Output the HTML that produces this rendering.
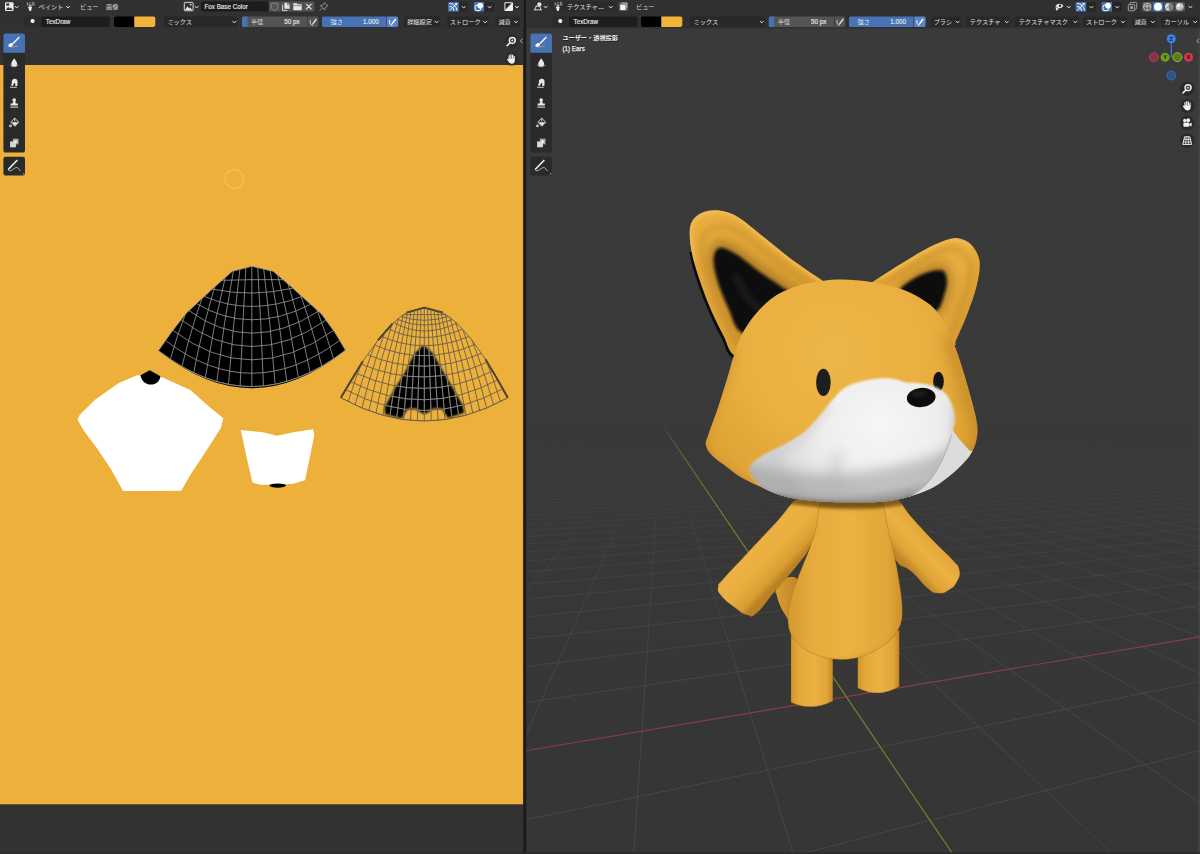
<!DOCTYPE html>
<html><head><meta charset="utf-8"><title>Blender</title>
<style>
html,body{margin:0;padding:0;background:#303030;overflow:hidden}
svg{display:block}
text{font-family:"Liberation Sans","Noto Sans CJK JP",sans-serif}
</style></head><body>
<svg width="1200" height="854" viewBox="0 0 1200 854">
<defs>
<clipPath id="c1"><path d="M251.8 266.3L273.2 271.3L291 286.5L307.5 301.5L321.5 314L335 332.6L345.5 350.3Q251.7 422.7 158.4 350.7L171.2 332.4L186 313.4L199.5 300.8L214 287.5L232.3 271.3Z"/></clipPath>
<filter id="b1" x="-10%" y="-10%" width="120%" height="120%"><feGaussianBlur stdDeviation="1.3"/></filter>
<clipPath id="c2"><path d="M424.3 307.7L442.8 312.7L449 316.8L458.2 324.4L472 340.1L485.4 359.2L496.9 378.4L507.8 397.8Q424.3 444.4 340.8 397.8L351.3 380.3L362.8 361.2L378.1 340.1L392.5 323.6L400.5 316.8L406.5 312.7Z"/></clipPath>
<clipPath id="cA"><path d="M423.7 345L433.2 353.7L443.8 372.7L454.3 390.6L462.7 405.3L464.2 412.7L448 418L441.7 408.5L433.2 408.5L429 411.7L424.3 414L419.5 411.7L416.4 408.5L407.9 408.5L401.6 418.5L385 414L384.6 407.4L394.2 389.5L404.8 372.7L414.3 353.7Z"/></clipPath>
<clipPath id="c2b"><path d="M424.3 307.7L442.8 312.7L449 316.8L458.2 324.4L472 340.1L485.4 359.2L496.9 378.4L507.8 397.8Q424.3 444.4 340.8 397.8L351.3 380.3L362.8 361.2L378.1 340.1L392.5 323.6L400.5 316.8L406.5 312.7Z"/></clipPath>
<filter id="b05" x="-5%" y="-5%" width="110%" height="110%"><feGaussianBlur stdDeviation="0.6"/></filter>
<linearGradient id="bgR" x1="0" y1="0" x2="0" y2="1"><stop offset="0" stop-color="#3a3a3a"/><stop offset="0.5" stop-color="#393939"/><stop offset="1" stop-color="#353535"/></linearGradient>
<clipPath id="vp"><rect x="526" y="0" width="674" height="854"/></clipPath>
<linearGradient id="gfade" x1="0" y1="425" x2="0" y2="854" gradientUnits="userSpaceOnUse"><stop offset="0" stop-color="#fff" stop-opacity="0"/><stop offset="0.05" stop-color="#fff" stop-opacity="0.03"/><stop offset="0.105" stop-color="#fff" stop-opacity="0.13"/><stop offset="0.22" stop-color="#fff" stop-opacity="0.38"/><stop offset="0.36" stop-color="#fff" stop-opacity="0.68"/><stop offset="0.6" stop-color="#fff" stop-opacity="1"/></linearGradient>
<mask id="gm" maskUnits="userSpaceOnUse" x="526" y="0" width="674" height="854"><rect x="526" y="425" width="674" height="429" fill="url(#gfade)"/></mask>
<linearGradient id="afade" x1="0" y1="425" x2="0" y2="854" gradientUnits="userSpaceOnUse"><stop offset="0" stop-color="#fff" stop-opacity="0"/><stop offset="0.02" stop-color="#fff" stop-opacity="0.25"/><stop offset="0.07" stop-color="#fff" stop-opacity="0.6"/><stop offset="0.2" stop-color="#fff" stop-opacity="0.9"/><stop offset="0.4" stop-color="#fff" stop-opacity="1"/></linearGradient>
<mask id="am" maskUnits="userSpaceOnUse" x="526" y="0" width="674" height="854"><rect x="526" y="425" width="674" height="429" fill="url(#afade)"/></mask>
<filter id="fb1" filterUnits="userSpaceOnUse" x="520" y="150" width="680" height="600"><feGaussianBlur stdDeviation="1.6"/></filter>
<filter id="fb2" filterUnits="userSpaceOnUse" x="520" y="150" width="680" height="600"><feGaussianBlur stdDeviation="3"/></filter>
<filter id="fb3" filterUnits="userSpaceOnUse" x="520" y="150" width="680" height="600"><feGaussianBlur stdDeviation="6"/></filter>
<filter id="fb07" filterUnits="userSpaceOnUse" x="520" y="150" width="680" height="600"><feGaussianBlur stdDeviation="0.9"/></filter>
<filter id="fb0" filterUnits="userSpaceOnUse" x="520" y="150" width="680" height="600"><feGaussianBlur stdDeviation="0.5"/></filter>
<clipPath id="headc"><path d="M734.3 354.6C737 346.9 739.6 338.5 743.7 331.1C747.8 323.8 753.1 316.6 758.7 310.5C764.3 304.4 770.5 298.8 777.4 294.6C784.3 290.4 792.4 287.5 799.9 285.2C807.4 282.9 815.7 281.8 822.4 280.9C829.1 280 834.4 279.7 840 279.6C845.6 279.5 850.5 279.9 856 280.3C861.5 280.7 866.1 281 872.8 282.2C879.5 283.4 889.2 285.3 896.2 287.4C903.2 289.5 908.6 291.6 914.9 295C921.1 298.4 928.7 303 933.7 308C938.7 313 941.5 318.9 944.9 324.9C948.3 330.8 951.2 337.1 953.9 343.7C956.6 350.3 958.3 355.6 961.1 364.4C963.9 373.1 967.8 386.2 970.5 396.2C973.2 406.2 976.2 416.8 977.1 424.3C978 431.8 977.2 436.2 976.1 441.2C975 446.2 973 450.2 970.5 454.3C968 458.4 965.1 461.4 961.1 465.5C957.1 469.6 951 474.9 946.2 478.6C941.4 482.3 937.8 485 932.5 487.7C927.2 490.4 920 493 914.2 495C908.4 497 903.8 498.4 897.7 499.6C891.6 500.8 885.5 501.6 877.5 502C869.5 502.4 859.2 502.4 850 502.3C840.8 502.2 831.7 502 822.5 501.4C813.3 500.8 802.6 499.9 795 498.7C787.4 497.5 782.8 496.2 776.7 494.1C770.6 492 764.4 488.7 758.3 485.8C752.2 482.9 745.1 479.8 740 476.7C734.9 473.6 732.1 470.9 727.5 467.4C722.9 463.9 716.1 459.6 712.5 455.8C708.9 452.1 706.5 448.6 705.9 444.9C705.3 441.2 706.7 439.9 708.7 433.7C710.7 427.4 715 416.8 718.1 407.4C721.2 398 724.8 386.3 727.5 377.5C730.2 368.7 731.6 362.3 734.3 354.6Z"/></clipPath>
<radialGradient id="gHead" gradientUnits="userSpaceOnUse" cx="835" cy="350" r="190"><stop offset="0" stop-color="#eeb548"/><stop offset="0.45" stop-color="#eab041"/><stop offset="0.8" stop-color="#e0a336"/><stop offset="1" stop-color="#d3962d"/></radialGradient>
<linearGradient id="gBody" gradientUnits="userSpaceOnUse" x1="790" y1="0" x2="905" y2="0"><stop offset="0" stop-color="#d59a30"/><stop offset="0.18" stop-color="#e6aa3c"/><stop offset="0.5" stop-color="#ecb243"/><stop offset="0.85" stop-color="#e3a638"/><stop offset="1" stop-color="#c98c28"/></linearGradient>
<linearGradient id="gTail" gradientUnits="userSpaceOnUse" x1="772" y1="0" x2="796" y2="0"><stop offset="0" stop-color="#dda135"/><stop offset="1" stop-color="#c48827"/></linearGradient>
<linearGradient id="gL1" gradientUnits="userSpaceOnUse" x1="791" y1="0" x2="832.8" y2="0"><stop offset="0" stop-color="#d1952c"/><stop offset="0.2" stop-color="#e5a93b"/><stop offset="0.55" stop-color="#ebb142"/><stop offset="0.85" stop-color="#e2a537"/><stop offset="1" stop-color="#c58926"/></linearGradient>
<linearGradient id="gL2" gradientUnits="userSpaceOnUse" x1="857.8" y1="0" x2="899.2" y2="0"><stop offset="0" stop-color="#d1952c"/><stop offset="0.2" stop-color="#e5a93b"/><stop offset="0.55" stop-color="#ebb142"/><stop offset="0.85" stop-color="#e2a537"/><stop offset="1" stop-color="#c58926"/></linearGradient>
<linearGradient id="gA1" gradientUnits="userSpaceOnUse" x1="742" y1="548" x2="778" y2="582"><stop offset="0" stop-color="#dfa437"/><stop offset="0.2" stop-color="#ebb142"/><stop offset="0.55" stop-color="#e9ae3f"/><stop offset="0.85" stop-color="#d99d32"/><stop offset="1" stop-color="#b98024"/></linearGradient>
<linearGradient id="gA2" gradientUnits="userSpaceOnUse" x1="912" y1="572" x2="940" y2="546"><stop offset="0" stop-color="#c08626"/><stop offset="0.25" stop-color="#e0a437"/><stop offset="0.6" stop-color="#ebb142"/><stop offset="1" stop-color="#e2a639"/></linearGradient>
<clipPath id="bodyc"><path d="M821.5 486C811.2 488 820.8 491.1 819.9 498C819 504.9 817.8 519.5 816.2 527.5C814.6 535.5 813.3 538.4 810.5 546.2C807.7 554 802.4 566.2 799.3 574.3C796.2 582.4 793.7 588.3 791.8 594.9C789.9 601.5 788.5 607.7 788.1 613.7C787.8 619.7 788 625.9 789.7 630.9C791.4 635.9 794.4 639.8 798.1 643.5C801.8 647.2 806.2 650.8 812.1 653.4C818 656 826.2 658.2 833.2 659C840.2 659.8 847.3 659.7 854.3 658.3C861.3 656.9 869.1 654 875.4 650.6C881.7 647.2 888 642.4 892.2 637.9C896.4 633.4 898.9 629 900.6 623.9C902.3 618.8 902.4 613.9 902.2 607.4C902.1 600.9 900.9 593 899.7 584.9C898.5 576.8 897 568.4 895 558.7C893 549 889.5 536.9 887.5 526.8C885.5 516.7 883.8 504.8 882.8 498C881.8 491.2 891.7 488 881.5 486C871.3 484 831.8 484 821.5 486Z"/></clipPath>
<clipPath id="torsoc"><path d="M821.5 486C811.2 488 820.8 491.1 819.9 498C819 504.9 817.8 519.5 816.2 527.5C814.6 535.5 813.3 538.4 810.5 546.2C807.7 554 802.4 566.2 799.3 574.3C796.2 582.4 793.7 588.3 791.8 594.9C789.9 601.5 788.5 607.7 788.1 613.7C787.8 619.7 788 625.9 789.7 630.9C791.4 635.9 794.4 639.8 798.1 643.5C801.8 647.2 806.2 650.8 812.1 653.4C818 656 826.2 658.2 833.2 659C840.2 659.8 847.3 659.7 854.3 658.3C861.3 656.9 869.1 654 875.4 650.6C881.7 647.2 888 642.4 892.2 637.9C896.4 633.4 898.9 629 900.6 623.9C902.3 618.8 902.4 613.9 902.2 607.4C902.1 600.9 900.9 593 899.7 584.9C898.5 576.8 897 568.4 895 558.7C893 549 889.5 536.9 887.5 526.8C885.5 516.7 883.8 504.8 882.8 498C881.8 491.2 891.7 488 881.5 486C871.3 484 831.8 484 821.5 486Z"/><path d="M800 497C788.5 504.1 789.1 508.6 774.9 523.7C760.7 538.8 760.5 539 746.8 553.7C733.1 568.4 731.1 570 723.5 578.8C715.9 587.6 718.7 582.2 718.2 586.8C717.7 591.4 717 590.3 721.6 596C726.2 601.7 728.6 602.9 735.5 608C742.4 613.1 741.9 613.8 747.6 615C753.3 616.2 749.7 618.9 757 612.6C764.3 606.3 764.1 603.9 774.9 591.2C785.7 578.5 787.9 576.9 797.4 564.9C806.9 552.9 803.9 558.2 810.5 546.2C817.1 534.2 820 533.1 822 520C824 506.9 823.9 503.1 818 497C812.1 490.9 811.5 489.9 800 497Z"/><path d="M884 497C887.3 489.1 890.1 494.7 897.5 500.2C904.9 505.7 902 506.4 911.8 517.5C921.6 528.6 923.4 530.5 934.3 541.8C945.2 553.1 945.9 552.6 952.5 560C959.1 567.4 958 563.8 959.2 569.5C960.4 575.2 960 575.8 957 581.4C954 587 953.2 587.3 948 590.4C942.8 593.5 943 593.6 937.6 593C932.2 592.4 934.5 593.9 927.6 588.2C920.7 582.5 920.5 579.7 911.8 571.8C903.1 563.9 902.1 569.8 895 558.7C887.9 547.6 887.9 546.5 885 530C882.1 513.5 880.7 504.9 884 497Z"/></clipPath>
<clipPath id="earLc"><path d="M736 356C728.2 353.1 727.8 343.7 723.1 334.9C718.5 326.1 713 315.2 708.1 303C703.2 290.8 697.1 273.7 694 261.8C690.9 250 689.4 239.5 689.7 231.9C690 224.3 692 220.1 696 216.5C700 212.9 707 210.4 713.7 210.3C720.4 210.2 727.8 211.4 736.2 215.9C744.6 220.4 754.9 230.2 764.3 237.5C773.7 244.8 782.7 252.8 792.4 260C802.1 267.2 813.5 274.3 822.4 280.6C831.3 286.9 846.4 289.8 846 298C845.6 306.2 832.7 321 820 330C807.3 339 784 347.7 770 352C756 356.3 743.8 358.9 736 356Z"/></clipPath>
<clipPath id="slc"><rect x="680" y="252" width="80" height="120"/></clipPath>
<linearGradient id="gEarL" gradientUnits="userSpaceOnUse" x1="700" y1="215" x2="790" y2="330"><stop offset="0" stop-color="#e9ae40"/><stop offset="1" stop-color="#d99d32"/></linearGradient>
<clipPath id="earRc"><path d="M872.8 281.8C880.5 276.9 887.6 272.1 896.2 266.8C904.8 261.5 916.2 254.4 924.3 250C932.4 245.6 939.3 242.6 944.9 240.6C950.5 238.6 953.6 237.6 958 238.2C962.4 238.8 967.5 240.6 971.1 244.4C974.7 248.2 978.7 254.3 979.6 261.2C980.5 268.1 978.8 276.9 976.8 285.6C974.8 294.4 970.8 304.6 967.4 313.7C964 322.8 958.5 334.7 956.2 339.9C954 345.1 957.4 345 953.9 345C950.4 345 944 345.8 935 340C926 334.2 914.2 317.3 900 310C885.8 302.7 854.5 300.7 850 296C845.5 291.3 865.1 286.7 872.8 281.8Z"/></clipPath>
<linearGradient id="gEarR" gradientUnits="userSpaceOnUse" x1="900" y1="260" x2="985" y2="300"><stop offset="0" stop-color="#e3a73a"/><stop offset="0.6" stop-color="#e9ae40"/><stop offset="1" stop-color="#d3972e"/></linearGradient>
<clipPath id="muzc"><path d="M749.5 467.4C750.7 463.7 756.1 459.6 761.2 456.2C766.3 452.8 773 450.6 779.9 446.8C786.8 443.1 796.1 438.4 802.4 433.7C808.6 429 812.4 424.3 817.4 418.7C822.4 413.1 828 405.1 832.4 400C836.8 394.9 839.7 391.2 844 388.2C848.3 385.2 852.3 383.8 858.1 382.2C863.9 380.6 872.5 378.9 878.7 378.4C885 377.9 891.1 378.6 895.6 379.3C900.1 380 902.3 381.9 906 382.5C909.7 383.1 913.2 382.3 918 383C922.8 383.7 930.2 384.9 934.9 386.8C939.6 388.7 943.2 390.9 946.2 394.3C949.2 397.7 951.3 403 952.7 407.4C954.1 411.8 954.8 416.2 954.6 420.6C954.5 425 952.9 429.3 951.8 433.7C950.7 438.1 949.9 441.8 948 446.8C946.1 451.8 943.3 458.4 940.5 463.7C937.7 469 934.6 474.2 931.2 478.6C927.8 483 923.8 486.8 920 489.9C916.2 493 912.4 495.2 908.7 497.4C905 499.6 902.9 501.6 897.7 503C892.5 504.4 885.5 505.3 877.5 506C869.5 506.7 859.2 507 850 507C840.8 507 831.7 506.7 822.5 506C813.3 505.3 802.6 504.5 795 503C787.4 501.5 782.2 499.7 776.7 497C771.2 494.3 765.8 490.1 762 487C758.2 483.9 756.1 481.9 754 478.6C751.9 475.3 748.3 471.1 749.5 467.4Z"/></clipPath>
<radialGradient id="gMuz" gradientUnits="userSpaceOnUse" cx="880" cy="425" r="110"><stop offset="0" stop-color="#f6f6f6"/><stop offset="0.5" stop-color="#efefef"/><stop offset="0.85" stop-color="#dedede"/><stop offset="1" stop-color="#cfcfcf"/></radialGradient>
</defs>
<rect x="0" y="0" width="524" height="854" fill="#323232"/>
<rect x="0" y="65" width="523.2" height="739.3" fill="#ecb03b"/>
<path d="M160 351.5 Q252 425 344 351 L 300 330 L 200 330Z" fill="#000" filter="url(#b05)"/>
<path d="M251.8 266.3L273.2 271.3L291 286.5L307.5 301.5L321.5 314L335 332.6L345.5 350.3Q251.7 422.7 158.4 350.7L171.2 332.4L186 313.4L199.5 300.8L214 287.5L232.3 271.3Z" fill="#000"/>
<g clip-path="url(#c1)"><path d="M222.1 280.3Q251 279.3 283.1 279.7M212.4 289Q251 297.5 292.8 288.2M204.3 296.4Q250.4 316.4 302 296.5M196.5 303.6Q250 335.6 310.6 304.3M189 310.6Q249.9 355.4 318.4 311.2M181.1 319.7Q250.1 373 326 320.2M172.8 330.3Q250.4 389.3 333.5 330.5M165.5 340.5Q251 406 339.7 340.5M158.4 350.7Q251.7 422.7 345.5 350.3M170.1 360.1Q183.7 311.7 207.1 264.3M181.7 367.4Q194.1 315.4 214.8 264.3M193.4 373.6Q204.1 318.5 221.8 264.3M205.1 378.7Q213.9 321 228.3 264.3M216.7 382.6Q223.5 322.9 234.5 264.3M228.4 385.4Q233 324.3 240.4 264.3M240.1 387.1Q242.4 325.2 246.1 264.3M251.8 387.6Q251.8 325.5 251.8 264.3M263.5 387Q261.2 325.2 257.5 264.3M275.2 385.3Q270.6 324.3 263.2 264.3M286.9 382.4Q280.1 322.9 269.1 264.3M298.6 378.5Q289.8 320.9 275.3 264.3M310.3 373.4Q299.6 318.3 281.9 264.3M322 367.1Q309.7 315.2 288.9 264.3M333.8 359.8Q320.1 311.5 296.7 264.3" fill="none" stroke="#9c9c9c" stroke-width="0.8"/></g>
<path d="M251.8 266.3L273.2 271.3L291 286.5L307.5 301.5L321.5 314L335 332.6L345.5 350.3Q251.7 422.7 158.4 350.7L171.2 332.4L186 313.4L199.5 300.8L214 287.5L232.3 271.3Z" fill="none" stroke="#9c9c9c" stroke-width="0.8"/>
<path d="M423.7 345L433.2 353.7L443.8 372.7L454.3 390.6L462.7 405.3L464.2 412.7L448 418L441.7 408.5L433.2 408.5L429 411.7L424.3 414L419.5 411.7L416.4 408.5L407.9 408.5L401.6 418.5L385 414L384.6 407.4L394.2 389.5L404.8 372.7L414.3 353.7Z" fill="#050505" filter="url(#b1)"/>
<path d="M340.8 397.8L351.3 380.3L362.8 361.2M378.1 340.1L392.5 323.6M406.5 312.7L424.3 307.7L442.8 312.7M485.4 359.2L496.9 378.4L507.8 397.8" stroke="#2a2416" stroke-width="1.8" fill="none"/>
<g clip-path="url(#c2)"><path d="M403.7 314.6Q423.9 314.6 445.7 314.6M401 316.5Q423.9 324.1 448.5 316.5M397.4 319.4Q423.6 330.8 452.5 319.7M393.7 322.6Q423.3 339.1 456.8 323.2M388.1 328.7Q423.3 346 462.4 329.2M381.4 336.3Q423.5 355 468.8 336.5M374.6 345Q423.8 366.5 475.1 344.5M367.5 354.7Q424.2 378.4 481.3 353.3M361 364.1Q424.5 390.7 487.2 362.2M355.7 373Q424.5 404.8 492.5 371M350.5 381.6Q424.5 418.8 497.7 379.9M345.6 389.7Q424.4 431.7 502.8 388.8M340.8 397.8Q424.3 444.4 507.8 397.8M347.8 402.5Q362.8 353.6 387.1 305.7M354.7 405.9Q368.7 355.3 391.1 305.7M361.7 409Q374.5 356.8 394.9 305.7M368.6 411.7Q380.2 358.2 398.5 305.7M375.6 414.2Q385.9 359.4 402 305.7M382.6 416.3Q391.5 360.5 405.4 305.7M389.5 418.1Q397 361.4 408.7 305.7M396.5 419.5Q402.5 362.1 411.9 305.7M403.4 420.6Q408 362.7 415 305.7M410.4 421.5Q413.4 363.1 418.2 305.7M417.3 421.9Q418.9 363.3 421.2 305.7M424.3 422.1Q424.3 363.4 424.3 305.7M431.3 421.9Q429.7 363.3 427.4 305.7M438.2 421.5Q435.2 363.1 430.4 305.7M445.2 420.6Q440.6 362.7 433.6 305.7M452.1 419.5Q446.1 362.1 436.7 305.7M459.1 418.1Q451.6 361.4 439.9 305.7M466.1 416.3Q457.1 360.5 443.2 305.7M473 414.2Q462.7 359.4 446.6 305.7M480 411.7Q468.4 358.2 450.1 305.7M486.9 409Q474.1 356.8 453.7 305.7M493.9 405.9Q479.9 355.3 457.5 305.7M500.8 402.5Q485.8 353.6 461.5 305.7" fill="none" stroke="#5e5a52" stroke-width="0.85"/></g>
<path d="M424.3 307.7L442.8 312.7L449 316.8L458.2 324.4L472 340.1L485.4 359.2L496.9 378.4L507.8 397.8Q424.3 444.4 340.8 397.8L351.3 380.3L362.8 361.2L378.1 340.1L392.5 323.6L400.5 316.8L406.5 312.7Z" fill="none" stroke="#5e5a52" stroke-width="0.85"/>
<g clip-path="url(#cA)">
<g clip-path="url(#c2b)"><path d="M403.7 314.6Q423.9 314.6 445.7 314.6M401 316.5Q423.9 324.1 448.5 316.5M397.4 319.4Q423.6 330.8 452.5 319.7M393.7 322.6Q423.3 339.1 456.8 323.2M388.1 328.7Q423.3 346 462.4 329.2M381.4 336.3Q423.5 355 468.8 336.5M374.6 345Q423.8 366.5 475.1 344.5M367.5 354.7Q424.2 378.4 481.3 353.3M361 364.1Q424.5 390.7 487.2 362.2M355.7 373Q424.5 404.8 492.5 371M350.5 381.6Q424.5 418.8 497.7 379.9M345.6 389.7Q424.4 431.7 502.8 388.8M340.8 397.8Q424.3 444.4 507.8 397.8M347.8 402.5Q362.8 353.6 387.1 305.7M354.7 405.9Q368.7 355.3 391.1 305.7M361.7 409Q374.5 356.8 394.9 305.7M368.6 411.7Q380.2 358.2 398.5 305.7M375.6 414.2Q385.9 359.4 402 305.7M382.6 416.3Q391.5 360.5 405.4 305.7M389.5 418.1Q397 361.4 408.7 305.7M396.5 419.5Q402.5 362.1 411.9 305.7M403.4 420.6Q408 362.7 415 305.7M410.4 421.5Q413.4 363.1 418.2 305.7M417.3 421.9Q418.9 363.3 421.2 305.7M424.3 422.1Q424.3 363.4 424.3 305.7M431.3 421.9Q429.7 363.3 427.4 305.7M438.2 421.5Q435.2 363.1 430.4 305.7M445.2 420.6Q440.6 362.7 433.6 305.7M452.1 419.5Q446.1 362.1 436.7 305.7M459.1 418.1Q451.6 361.4 439.9 305.7M466.1 416.3Q457.1 360.5 443.2 305.7M473 414.2Q462.7 359.4 446.6 305.7M480 411.7Q468.4 358.2 450.1 305.7M486.9 409Q474.1 356.8 453.7 305.7M493.9 405.9Q479.9 355.3 457.5 305.7M500.8 402.5Q485.8 353.6 461.5 305.7" fill="none" stroke="#8e8e8e" stroke-width="0.8"/></g>
<path d="M424.3 307.7L442.8 312.7L449 316.8L458.2 324.4L472 340.1L485.4 359.2L496.9 378.4L507.8 397.8Q424.3 444.4 340.8 397.8L351.3 380.3L362.8 361.2L378.1 340.1L392.5 323.6L400.5 316.8L406.5 312.7Z" fill="none" stroke="#8e8e8e" stroke-width="0.8"/>
</g>
<path d="M137 375.2L162.7 377.5L190.7 390.3L209.3 406.7L223.3 418.3L221 427.7L204.7 453.3L190.7 474.3L181.3 490.7L153.3 490.9L123 491.1L111.3 469.7L97.3 448.7L83.3 430L77.5 419.5L79.8 414.8L95 399.7L118.3 383.3Z" fill="#fff" filter="url(#b05)"/>
<path d="M140.5 375.2L149.8 370.3L160.3 376.3C160 381 156 384.6 151 384.6C145 384.6 141 380 140.5 375.2Z" fill="#000"/>
<path d="M240.8 430L263 432.3L277 435.8L293.3 432.3L313.2 429.3L314.3 434.7L309.7 458L305 480.2L293.3 483.7L277 484.8L260.7 484.8L252.5 482.5L246.7 458Z" fill="#fff" filter="url(#b05)"/>
<ellipse cx="277.7" cy="485.6" rx="8.3" ry="2.1" fill="#000"/>
<circle cx="234.2" cy="179" r="9.3" fill="none" stroke="#ffcf5e" stroke-width="1" opacity="0.85"/>
<rect x="526" y="0" width="674" height="854" fill="url(#bgR)"/>
<rect x="1198.2" y="28" width="1.8" height="826" fill="#434343"/>
<g clip-path="url(#vp)"><g mask="url(#gm)">
<path d="M-217511.9 5388.5L636.4 425.6M-215665.8 5388.5L636.7 425.6M-213819.7 5388.5L636.9 425.6M-211973.5 5388.5L637.1 425.6M-210127.4 5388.5L637.3 425.6M-208281.3 5388.5L637.5 425.6M-206435.1 5388.5L637.8 425.6M-204589 5388.5L638 425.6M-202742.8 5388.5L638.2 425.6M-200896.7 5388.5L638.4 425.6M-199050.6 5388.5L638.6 425.6M-197204.4 5388.5L638.9 425.6M-195358.3 5388.5L639.1 425.6M-193512.2 5388.5L639.3 425.6M-191666 5388.5L639.5 425.6M-189819.9 5388.5L639.7 425.6M-187973.8 5388.5L640 425.6M-186127.6 5388.5L640.2 425.6M-184281.5 5388.5L640.4 425.6M-182435.3 5388.5L640.6 425.6M-180589.2 5388.5L640.8 425.6M-178743.1 5388.5L641.1 425.6M-176896.9 5388.5L641.3 425.6M-175050.8 5388.5L641.5 425.6M-173204.7 5388.5L641.7 425.6M-171358.5 5388.5L641.9 425.6M-169512.4 5388.5L642.2 425.6M-167666.3 5388.5L642.4 425.6M-165820.1 5388.5L642.6 425.6M-163974 5388.5L642.8 425.6M-162127.8 5388.5L643 425.6M-160281.7 5388.5L643.3 425.6M-158435.6 5388.5L643.5 425.6M-156589.4 5388.5L643.7 425.6M-154743.3 5388.5L643.9 425.6M-152897.2 5388.5L644.1 425.6M-151051 5388.5L644.4 425.6M-149204.9 5388.5L644.6 425.6M-147358.7 5388.5L644.8 425.6M-145512.6 5388.5L645 425.6M-143666.5 5388.5L645.2 425.6M-141820.3 5388.5L645.5 425.6M-139974.2 5388.5L645.7 425.6M-138128.1 5388.5L645.9 425.6M-136281.9 5388.5L646.1 425.6M-134435.8 5388.5L646.3 425.6M-132589.7 5388.5L646.5 425.6M-130743.5 5388.5L646.8 425.6M-128897.4 5388.5L647 425.6M-127051.2 5388.5L647.2 425.6M-125205.1 5388.5L647.4 425.6M-123359 5388.5L647.6 425.6M-121512.8 5388.5L647.9 425.6M-119666.7 5388.5L648.1 425.6M-117820.6 5388.5L648.3 425.6M-115974.4 5388.5L648.5 425.6M-114128.3 5388.5L648.7 425.6M-112282.2 5388.5L649 425.6M-110436 5388.5L649.2 425.6M-108589.9 5388.5L649.4 425.6M-106743.7 5388.5L649.6 425.6M-104897.6 5388.5L649.8 425.6M-103051.5 5388.5L650 425.6M-101205.3 5388.5L650.3 425.6M-99359.2 5388.5L650.5 425.6M-97513.1 5388.5L650.7 425.6M-95666.9 5388.5L650.9 425.6M-93820.8 5388.5L651.1 425.6M-91974.6 5388.5L651.3 425.6M-90128.5 5388.5L651.6 425.6M-88282.4 5388.5L651.8 425.6M-86436.2 5388.5L652 425.6M-84590.1 5388.5L652.2 425.6M-82744 5388.5L652.4 425.6M-80897.8 5388.5L652.7 425.6M-79051.7 5388.5L652.9 425.6M-77205.6 5388.5L653.1 425.6M-75359.4 5388.5L653.3 425.6M-73513.3 5388.5L653.5 425.6M-71667.1 5388.5L653.7 425.6M-69821 5388.5L654 425.6M-67974.9 5388.5L654.2 425.6M-66128.7 5388.5L654.4 425.6M-64282.6 5388.5L654.6 425.6M-62436.5 5388.5L654.8 425.6M-60590.3 5388.5L655 425.6M-58744.2 5388.5L655.3 425.6M-56898.1 5388.5L655.5 425.6M-55051.9 5388.5L655.7 425.6M-53205.8 5388.5L655.9 425.6M-51359.6 5388.5L656.1 425.6M-49513.5 5388.5L656.3 425.6M-47667.4 5388.5L656.6 425.6M-45821.2 5388.5L656.8 425.6M-43975.1 5388.5L657 425.6M-42129 5388.5L657.2 425.6M-40282.8 5388.5L657.4 425.6M-38436.7 5388.5L657.6 425.6M-36590.5 5388.5L657.9 425.6M-34744.4 5388.5L658.1 425.6M-32898.3 5388.5L658.3 425.6M-31052.1 5388.5L658.5 425.6M-29206 5388.5L658.7 425.6M-27359.9 5388.5L658.9 425.6M-25513.7 5388.5L659.1 425.6M-23667.6 5388.5L659.4 425.6M-21821.5 5388.5L659.6 425.6M-19975.3 5388.5L659.8 425.6M-18129.2 5388.5L660 425.6M-16283 5388.5L660.2 425.6M-14436.9 5388.5L660.4 425.6M-12590.8 5388.5L660.7 425.6M-10744.6 5388.5L660.9 425.6M-8898.5 5388.5L661.1 425.6M-7052.4 5388.5L661.3 425.6M-5206.2 5388.5L661.5 425.6M-3360.1 5388.5L661.7 425.6M-1514 5388.5L661.9 425.6M332.2 5388.5L662.2 425.6M2178.3 5388.5L662.4 425.6M5870.6 5388.5L662.8 425.6M7716.7 5388.5L663 425.6M9562.9 5388.5L663.2 425.6M11409 5388.5L663.5 425.6M13255.1 5388.5L663.7 425.6M15101.3 5388.5L663.9 425.6M16947.4 5388.5L664.1 425.6M18793.6 5388.5L664.3 425.6M20639.7 5388.5L664.5 425.6M22485.8 5388.5L664.7 425.6M24332 5388.5L665 425.6M26178.1 5388.5L665.2 425.6M28024.2 5388.5L665.4 425.6M29870.4 5388.5L665.6 425.6M31716.5 5388.5L665.8 425.6M33562.6 5388.5L666 425.6M35408.8 5388.5L666.2 425.6M37254.9 5388.5L666.5 425.6M39101.1 5388.5L666.7 425.6M40947.2 5388.5L666.9 425.6M42793.3 5388.5L667.1 425.6M44639.5 5388.5L667.3 425.6M46485.6 5388.5L667.5 425.6M48331.7 5388.5L667.7 425.6M50177.9 5388.5L667.9 425.6M52024 5388.5L668.2 425.6M53870.1 5388.5L668.4 425.6M55716.3 5388.5L668.6 425.6M57562.4 5388.5L668.8 425.6M59408.6 5388.5L669 425.6M61254.7 5388.5L669.2 425.6M63100.8 5388.5L669.4 425.6M64947 5388.5L669.7 425.6M66793.1 5388.5L669.9 425.6M68639.2 5388.5L670.1 425.6M70485.4 5388.5L670.3 425.6M72331.5 5388.5L670.5 425.6M74177.7 5388.5L670.7 425.6M76023.8 5388.5L670.9 425.6M77869.9 5388.5L671.1 425.6M79716.1 5388.5L671.4 425.6M81562.2 5388.5L671.6 425.6M83408.3 5388.5L671.8 425.6M85254.5 5388.5L672 425.6M87100.6 5388.5L672.2 425.6M88946.7 5388.5L672.4 425.6M90792.9 5388.5L672.6 425.6M92639 5388.5L672.8 425.6M94485.2 5388.5L673.1 425.6M96331.3 5388.5L673.3 425.6M98177.4 5388.5L673.5 425.6M100023.6 5388.5L673.7 425.6M101869.7 5388.5L673.9 425.6M103715.8 5388.5L674.1 425.6M105562 5388.5L674.3 425.6M107408.1 5388.5L674.5 425.6M109254.2 5388.5L674.8 425.6M111100.4 5388.5L675 425.6M112946.5 5388.5L675.2 425.6M114792.7 5388.5L675.4 425.6M116638.8 5388.5L675.6 425.6M118484.9 5388.5L675.8 425.6M120331.1 5388.5L676 425.6M122177.2 5388.5L676.2 425.6M124023.3 5388.5L676.5 425.6M125869.5 5388.5L676.7 425.6M127715.6 5388.5L676.9 425.6M129561.7 5388.5L677.1 425.6M131407.9 5388.5L677.3 425.6M133254 5388.5L677.5 425.6M135100.2 5388.5L677.7 425.6M136946.3 5388.5L677.9 425.6M138792.4 5388.5L678.1 425.6M140638.6 5388.5L678.4 425.6M142484.7 5388.5L678.6 425.6M144330.8 5388.5L678.8 425.6M146177 5388.5L679 425.6M148023.1 5388.5L679.2 425.6M149869.3 5388.5L679.4 425.6M151715.4 5388.5L679.6 425.6M153561.5 5388.5L679.8 425.6M155407.7 5388.5L680 425.6M157253.8 5388.5L680.3 425.6M159099.9 5388.5L680.5 425.6M160946.1 5388.5L680.7 425.6M162792.2 5388.5L680.9 425.6M164638.3 5388.5L681.1 425.6M166484.5 5388.5L681.3 425.6M168330.6 5388.5L681.5 425.6M170176.8 5388.5L681.7 425.6M172022.9 5388.5L681.9 425.6M173869 5388.5L682.1 425.6M175715.2 5388.5L682.4 425.6M177561.3 5388.5L682.6 425.6M179407.4 5388.5L682.8 425.6M181253.6 5388.5L683 425.6M183099.7 5388.5L683.2 425.6M184945.8 5388.5L683.4 425.6M186792 5388.5L683.6 425.6M188638.1 5388.5L683.8 425.6M190484.3 5388.5L684 425.6M192330.4 5388.5L684.2 425.6M194176.5 5388.5L684.5 425.6M196022.7 5388.5L684.7 425.6M197868.8 5388.5L684.9 425.6M199714.9 5388.5L685.1 425.6M201561.1 5388.5L685.3 425.6M203407.2 5388.5L685.5 425.6M205253.4 5388.5L685.7 425.6M207099.5 5388.5L685.9 425.6M208945.6 5388.5L686.1 425.6M210791.8 5388.5L686.3 425.6M212637.9 5388.5L686.5 425.6M214484 5388.5L686.8 425.6M216330.2 5388.5L687 425.6M218176.3 5388.5L687.2 425.6M220022.4 5388.5L687.4 425.6M221868.6 5388.5L687.6 425.6M223714.7 5388.5L687.8 425.6M225560.9 5388.5L688 425.6M-1677.2 5859L2444.9 436.9M-7282 5859L2432.8 436.8M-12886.7 5859L2420.8 436.8M-18491.5 5859L2409 436.7M-24096.2 5859L2397.3 436.6M-35305.8 5859L2374.4 436.5M-40910.5 5859L2363.2 436.4M-46515.3 5859L2352.1 436.3M-52120 5859L2341.2 436.2M-57724.8 5859L2330.4 436.2M-63329.5 5859L2319.7 436.1M-68934.3 5859L2309.2 436M-74539 5859L2298.8 436M-80143.8 5859L2288.6 435.9M-85748.5 5859L2278.5 435.8M-91353.3 5859L2268.5 435.7M-96958 5859L2258.6 435.7M-102562.8 5859L2248.8 435.6M-108167.5 5859L2239.2 435.6M-113772.3 5859L2229.7 435.5M-119377 5859L2220.3 435.4M-124981.8 5859L2211 435.4M-130586.5 5859L2201.8 435.3M-136191.3 5859L2192.7 435.2M-141796 5859L2183.7 435.2M-147400.8 5859L2174.9 435.1M-153005.5 5859L2166.1 435.1M-158610.3 5859L2157.5 435M-164215 5859L2148.9 434.9M-169819.8 5859L2140.4 434.9M-175424.5 5859L2132.1 434.8M-181029.3 5859L2123.8 434.8M-186634 5859L2115.6 434.7M-192238.8 5859L2107.5 434.7M-197843.5 5859L2099.5 434.6M-203448.3 5859L2091.6 434.6M-209053 5859L2083.8 434.5M-214657.8 5859L2076 434.5M-220262.5 5859L2068.4 434.4M-225867.3 5859L2060.8 434.4M-231472 5859L2053.3 434.3M-237076.8 5859L2045.9 434.3M-242681.5 5859L2038.6 434.2M-248286.3 5859L2031.3 434.2M-253891 5859L2024.1 434.1M-259495.8 5859L2017 434.1M-265100.5 5859L2010 434M-270705.3 5859L2003 434M-276310 5859L1996.1 433.9M-281914.8 5859L1989.3 433.9M-287519.5 5859L1982.6 433.8M-293124.3 5859L1975.9 433.8M-298729 5859L1969.3 433.7M-304333.8 5859L1962.7 433.7M-309938.5 5859L1956.2 433.7M-315543.3 5859L1949.8 433.6M-321148 5859L1943.5 433.6M-326752.8 5859L1937.2 433.5M-332357.5 5859L1930.9 433.5M-337962.3 5859L1924.8 433.4M-343567 5859L1918.7 433.4M-349171.8 5859L1912.6 433.4M-354776.5 5859L1906.6 433.3M-360381.3 5859L1900.7 433.3M-365986 5859L1894.8 433.2M-371590.8 5859L1889 433.2M-377195.5 5859L1883.2 433.2M-382800.3 5859L1877.5 433.1M-388405 5859L1871.8 433.1M-394009.8 5859L1866.2 433.1M-399614.5 5859L1860.7 433M-405219.3 5859L1855.2 433M-410824 5859L1849.7 432.9M-416428.8 5859L1844.3 432.9M-422033.5 5859L1838.9 432.9M-427638.3 5859L1833.6 432.8M-433243 5859L1828.4 432.8M-438847.8 5859L1823.2 432.8M-444452.5 5859L1818 432.7M-450057.3 5859L1812.9 432.7M-455662 5859L1807.8 432.7M-461266.8 5859L1802.8 432.6M-466871.5 5859L1797.8 432.6M-472476.3 5859L1792.8 432.6M-478081 5859L1787.9 432.5M-483685.8 5859L1783.1 432.5M-489290.5 5859L1778.2 432.5M-494895.3 5859L1773.5 432.4M-500500 5859L1768.7 432.4M-506104.8 5859L1764 432.4M-511709.5 5859L1759.4 432.3M-517314.3 5859L1754.8 432.3M-522919 5859L1750.2 432.3M-528523.8 5859L1745.6 432.2M-534128.5 5859L1741.1 432.2" stroke="#585858" stroke-width="0.8" fill="none" opacity="0.62"/>
</g>
<g mask="url(#am)">
<path d="M-36569.1 7019.7L2385.8 436.5" stroke="#8e3b4a" stroke-width="1.1" fill="none"/>
<path d="M3650 4835.7L662.6 425.6" stroke="#6f8f2e" stroke-width="1.1" fill="none"/>
</g></g>
<g clip-path="url(#vp)">
<path d="M776 586C776.8 581.8 780.3 579 784 578C787.7 577 795.3 574.7 798 580C800.7 585.3 800.7 602 800 610C799.3 618 796.3 627 794 628C791.7 629 788.5 620.2 786 616C783.5 611.8 780.7 608 779 603C777.3 598 775.2 590.2 776 586Z" fill="url(#gTail)"/>
<path d="M791 630L791 702.5Q811.9 711.7 832.8 701L832.8 655Z" fill="url(#gL1)" stroke="#8a5f18" stroke-width="0.5" stroke-opacity="0.6"/>
<path d="M857.8 655L857.8 688Q878.5 698.8 899.2 686.5L899.2 630Z" fill="url(#gL2)" stroke="#8a5f18" stroke-width="0.5" stroke-opacity="0.6"/>
<path d="M800 497C788.5 504.1 789.1 508.6 774.9 523.7C760.7 538.8 760.5 539 746.8 553.7C733.1 568.4 731.1 570 723.5 578.8C715.9 587.6 718.7 582.2 718.2 586.8C717.7 591.4 717 590.3 721.6 596C726.2 601.7 728.6 602.9 735.5 608C742.4 613.1 741.9 613.8 747.6 615C753.3 616.2 749.7 618.9 757 612.6C764.3 606.3 764.1 603.9 774.9 591.2C785.7 578.5 787.9 576.9 797.4 564.9C806.9 552.9 803.9 558.2 810.5 546.2C817.1 534.2 820 533.1 822 520C824 506.9 823.9 503.1 818 497C812.1 490.9 811.5 489.9 800 497Z" fill="url(#gA1)" stroke="#8a5f18" stroke-width="0.5" stroke-opacity="0.5"/>
<path d="M884 497C887.3 489.1 890.1 494.7 897.5 500.2C904.9 505.7 902 506.4 911.8 517.5C921.6 528.6 923.4 530.5 934.3 541.8C945.2 553.1 945.9 552.6 952.5 560C959.1 567.4 958 563.8 959.2 569.5C960.4 575.2 960 575.8 957 581.4C954 587 953.2 587.3 948 590.4C942.8 593.5 943 593.6 937.6 593C932.2 592.4 934.5 593.9 927.6 588.2C920.7 582.5 920.5 579.7 911.8 571.8C903.1 563.9 902.1 569.8 895 558.7C887.9 547.6 887.9 546.5 885 530C882.1 513.5 880.7 504.9 884 497Z" fill="url(#gA2)" stroke="#8a5f18" stroke-width="0.5" stroke-opacity="0.5"/>
<path d="M821.5 486C811.2 488 820.8 491.1 819.9 498C819 504.9 817.8 519.5 816.2 527.5C814.6 535.5 813.3 538.4 810.5 546.2C807.7 554 802.4 566.2 799.3 574.3C796.2 582.4 793.7 588.3 791.8 594.9C789.9 601.5 788.5 607.7 788.1 613.7C787.8 619.7 788 625.9 789.7 630.9C791.4 635.9 794.4 639.8 798.1 643.5C801.8 647.2 806.2 650.8 812.1 653.4C818 656 826.2 658.2 833.2 659C840.2 659.8 847.3 659.7 854.3 658.3C861.3 656.9 869.1 654 875.4 650.6C881.7 647.2 888 642.4 892.2 637.9C896.4 633.4 898.9 629 900.6 623.9C902.3 618.8 902.4 613.9 902.2 607.4C902.1 600.9 900.9 593 899.7 584.9C898.5 576.8 897 568.4 895 558.7C893 549 889.5 536.9 887.5 526.8C885.5 516.7 883.8 504.8 882.8 498C881.8 491.2 891.7 488 881.5 486C871.3 484 831.8 484 821.5 486Z" fill="url(#gBody)" stroke="#8a5f18" stroke-width="0.5" stroke-opacity="0.6"/>
<g clip-path="url(#bodyc)">
<path d="M780 640 Q845 690 910 625 L910 670 L780 670Z" fill="#b57c22" opacity="0.45" filter="url(#fb2)"/>
<ellipse cx="850" cy="498" rx="50" ry="9" fill="#7a5214" opacity="0.55" filter="url(#fb2)"/>
</g>
<g clip-path="url(#torsoc)"><path d="M776.7 496C779.8 496.8 787.4 499.4 795 500.6C802.6 501.8 813.3 502.8 822.5 503.4C831.7 504 840.8 504.3 850 504.4C859.2 504.5 869.5 504.5 877.5 504C885.5 503.5 891.6 502.8 897.7 501.6C903.8 500.4 908.4 499 914.2 497C920 495 929.5 490.7 932.5 489.4" fill="none" stroke="#5a3c0c" stroke-width="8" opacity="0.7" filter="url(#fb1)"/></g>
<g clip-path="url(#slc)"><path d="M736 356C728.2 353.1 727.8 343.7 723.1 334.9C718.5 326.1 713 315.2 708.1 303C703.2 290.8 697.1 273.7 694 261.8C690.9 250 689.4 239.5 689.7 231.9C690 224.3 692 220.1 696 216.5C700 212.9 707 210.4 713.7 210.3C720.4 210.2 727.8 211.4 736.2 215.9C744.6 220.4 754.9 230.2 764.3 237.5C773.7 244.8 782.7 252.8 792.4 260C802.1 267.2 813.5 274.3 822.4 280.6C831.3 286.9 846.4 289.8 846 298C845.6 306.2 832.7 321 820 330C807.3 339 784 347.7 770 352C756 356.3 743.8 358.9 736 356Z" fill="#0b0b0b" transform="translate(-1.9,2.6)"/></g>
<path d="M736 356C728.2 353.1 727.8 343.7 723.1 334.9C718.5 326.1 713 315.2 708.1 303C703.2 290.8 697.1 273.7 694 261.8C690.9 250 689.4 239.5 689.7 231.9C690 224.3 692 220.1 696 216.5C700 212.9 707 210.4 713.7 210.3C720.4 210.2 727.8 211.4 736.2 215.9C744.6 220.4 754.9 230.2 764.3 237.5C773.7 244.8 782.7 252.8 792.4 260C802.1 267.2 813.5 274.3 822.4 280.6C831.3 286.9 846.4 289.8 846 298C845.6 306.2 832.7 321 820 330C807.3 339 784 347.7 770 352C756 356.3 743.8 358.9 736 356Z" fill="url(#gEarL)"/>
<g clip-path="url(#earLc)">
<path d="M744 336C735.2 331.7 732 318.3 727 309C722 299.7 717 289.2 714 280C711 270.8 708.2 260.5 709 254C709.8 247.5 714.2 242 719 241C723.8 240 730.8 243.8 738 248C745.2 252.2 753.3 259.7 762 266C770.7 272.3 782.8 280.3 790 286C797.2 291.7 806.7 291.8 805 300C803.3 308.2 790.2 329 780 335C769.8 341 752.8 340.3 744 336Z" fill="#7a5315" opacity="0.55" filter="url(#fb3)"/>
<path d="M694 262C693.4 257.2 690 240.3 690.5 233C691 225.7 693.1 221.5 697 218C700.9 214.5 707.2 212.1 713.7 212C720.2 211.9 727.8 213 736.2 217.5C744.6 222 754.9 231.7 764.3 239C773.7 246.3 782.8 254.3 792.4 261.5C802 268.7 817.1 278.6 822 282" fill="none" stroke="#f4c056" stroke-width="3.5" opacity="0.8" filter="url(#fb1)"/>
<path d="M736 356C728.2 353.1 727.8 343.7 723.1 334.9C718.5 326.1 713 315.2 708.1 303C703.2 290.8 697.1 273.7 694 261.8C690.9 250 689.4 239.5 689.7 231.9C690 224.3 692 220.1 696 216.5C700 212.9 707 210.4 713.7 210.3C720.4 210.2 727.8 211.4 736.2 215.9C744.6 220.4 754.9 230.2 764.3 237.5C773.7 244.8 782.7 252.8 792.4 260C802.1 267.2 813.5 274.3 822.4 280.6C831.3 286.9 846.4 289.8 846 298C845.6 306.2 832.7 321 820 330C807.3 339 784 347.7 770 352C756 356.3 743.8 358.9 736 356Z" fill="none" stroke="#c0852a" stroke-width="7" opacity="0.4" filter="url(#fb2)" transform="translate(748,292) scale(0.8) translate(-748,-292)"/>
<path d="M742.8 333C734.2 329.4 732.9 317.4 728.7 308.7C724.5 300 720 289.1 717.5 280.6C715 272.2 713.2 263.5 713.7 258C714.2 252.5 716.5 248.4 720.3 247.8C724 247.2 729.8 250.4 736.2 254.3C742.6 258.2 750.6 265.4 758.7 271.2C766.8 277 778 284.2 784.9 289C791.8 293.8 800.8 293.2 800 300C799.2 306.8 789.5 324.5 780 330C770.5 335.5 751.3 336.6 742.8 333Z" fill="#0a0a0a" filter="url(#fb1)"/>
<path d="M735 275C737.5 279.2 744.2 292.8 750 300C755.8 307.2 766.7 315 770 318" fill="none" stroke="#3a3a3a" stroke-width="5" opacity="0.5" filter="url(#fb2)"/>
</g>
<path d="M872.8 281.8C880.5 276.9 887.6 272.1 896.2 266.8C904.8 261.5 916.2 254.4 924.3 250C932.4 245.6 939.3 242.6 944.9 240.6C950.5 238.6 953.6 237.6 958 238.2C962.4 238.8 967.5 240.6 971.1 244.4C974.7 248.2 978.7 254.3 979.6 261.2C980.5 268.1 978.8 276.9 976.8 285.6C974.8 294.4 970.8 304.6 967.4 313.7C964 322.8 958.5 334.7 956.2 339.9C954 345.1 957.4 345 953.9 345C950.4 345 944 345.8 935 340C926 334.2 914.2 317.3 900 310C885.8 302.7 854.5 300.7 850 296C845.5 291.3 865.1 286.7 872.8 281.8Z" fill="url(#gEarR)"/>
<g clip-path="url(#earRc)">
<path d="M897 290C899.2 284.5 913.2 274.3 921 270C928.8 265.7 938.8 262.3 944 264C949.2 265.7 951.3 274 952 280C952.7 286 950 294.3 948 300C946 305.7 943.8 311.3 940 314C936.2 316.7 930.3 317.8 925 316C919.7 314.2 912.7 307.3 908 303C903.3 298.7 894.8 295.5 897 290Z" fill="#7a5315" opacity="0.5" filter="url(#fb3)"/>
<path d="M880 278C882.7 276.4 888.8 272.7 896.2 268.3C903.6 263.9 916.2 255.9 924.3 251.5C932.4 247.1 939.3 243.9 944.9 242C950.5 240.1 953.8 239.3 958 240C962.2 240.7 968 245 970 246" fill="none" stroke="#f4c056" stroke-width="3.5" opacity="0.8" filter="url(#fb1)"/>
<path d="M872.8 281.8C880.5 276.9 887.6 272.1 896.2 266.8C904.8 261.5 916.2 254.4 924.3 250C932.4 245.6 939.3 242.6 944.9 240.6C950.5 238.6 953.6 237.6 958 238.2C962.4 238.8 967.5 240.6 971.1 244.4C974.7 248.2 978.7 254.3 979.6 261.2C980.5 268.1 978.8 276.9 976.8 285.6C974.8 294.4 970.8 304.6 967.4 313.7C964 322.8 958.5 334.7 956.2 339.9C954 345.1 957.4 345 953.9 345C950.4 345 944 345.8 935 340C926 334.2 914.2 317.3 900 310C885.8 302.7 854.5 300.7 850 296C845.5 291.3 865.1 286.7 872.8 281.8Z" fill="none" stroke="#c0852a" stroke-width="6" opacity="0.4" filter="url(#fb2)" transform="translate(932,292) scale(0.8) translate(-932,-292)"/>
<path d="M900 289.5C902.1 285.2 915.4 277.4 922.4 274.3C929.4 271.2 938 269.4 942.1 270.6C946.2 271.9 946.6 277.1 946.8 281.8C946.9 286.5 944.6 294 943 298.7C941.4 303.4 940.4 307.8 937.4 310C934.4 312.2 929.6 313.7 925 312C920.4 310.3 914.2 303.8 910 300C905.8 296.2 897.9 293.8 900 289.5Z" fill="#0a0a0a" filter="url(#fb1)"/>
</g>
<path d="M734.3 354.6C737 346.9 739.6 338.5 743.7 331.1C747.8 323.8 753.1 316.6 758.7 310.5C764.3 304.4 770.5 298.8 777.4 294.6C784.3 290.4 792.4 287.5 799.9 285.2C807.4 282.9 815.7 281.8 822.4 280.9C829.1 280 834.4 279.7 840 279.6C845.6 279.5 850.5 279.9 856 280.3C861.5 280.7 866.1 281 872.8 282.2C879.5 283.4 889.2 285.3 896.2 287.4C903.2 289.5 908.6 291.6 914.9 295C921.1 298.4 928.7 303 933.7 308C938.7 313 941.5 318.9 944.9 324.9C948.3 330.8 951.2 337.1 953.9 343.7C956.6 350.3 958.3 355.6 961.1 364.4C963.9 373.1 967.8 386.2 970.5 396.2C973.2 406.2 976.2 416.8 977.1 424.3C978 431.8 977.2 436.2 976.1 441.2C975 446.2 973 450.2 970.5 454.3C968 458.4 965.1 461.4 961.1 465.5C957.1 469.6 951 474.9 946.2 478.6C941.4 482.3 937.8 485 932.5 487.7C927.2 490.4 920 493 914.2 495C908.4 497 903.8 498.4 897.7 499.6C891.6 500.8 885.5 501.6 877.5 502C869.5 502.4 859.2 502.4 850 502.3C840.8 502.2 831.7 502 822.5 501.4C813.3 500.8 802.6 499.9 795 498.7C787.4 497.5 782.8 496.2 776.7 494.1C770.6 492 764.4 488.7 758.3 485.8C752.2 482.9 745.1 479.8 740 476.7C734.9 473.6 732.1 470.9 727.5 467.4C722.9 463.9 716.1 459.6 712.5 455.8C708.9 452.1 706.5 448.6 705.9 444.9C705.3 441.2 706.7 439.9 708.7 433.7C710.7 427.4 715 416.8 718.1 407.4C721.2 398 724.8 386.3 727.5 377.5C730.2 368.7 731.6 362.3 734.3 354.6Z" fill="url(#gHead)"/>
<g clip-path="url(#headc)">
<path d="M950 335C953 345 963 379.2 968 395C973 410.8 978.8 420 980 430C981.2 440 980 446.7 975 455C970 463.3 954.2 475.8 950 480" fill="none" stroke="#b98024" stroke-width="16" opacity="0.55" filter="url(#fb3)"/>
<path d="M700 440C702 443.3 705.3 453.3 712 460C718.7 466.7 729.5 473.8 740 480C750.5 486.2 769.2 494.2 775 497" fill="none" stroke="#c0872a" stroke-width="10" opacity="0.5" filter="url(#fb2)"/>
<path d="M736 352C734 357.5 728 373.7 724 385C720 396.3 715.3 410 712 420C708.7 430 705.3 440.8 704 445" fill="none" stroke="#c68c2a" stroke-width="8" opacity="0.35" filter="url(#fb2)"/>
<path d="M949 428C951.2 427.1 957.7 437.4 961.1 441.2C964.5 444.9 967.3 448.7 969.6 450.5C971.9 452.3 974.1 448.8 975 452C975.9 455.2 979.8 464.5 975 470C970.2 475.5 956.3 480 946.2 485C936.1 490 921.1 497.5 914.2 500C907.3 502.5 904 501.7 905 500C906 498.3 915.6 493.5 920 489.9C924.4 486.3 927.8 483 931.2 478.6C934.6 474.2 937.7 469 940.5 463.7C943.3 458.4 946.6 452.8 948 446.8C949.4 440.9 946.8 428.9 949 428Z" fill="#dcdcdc" filter="url(#fb0)"/>
<ellipse cx="938.5" cy="381.5" rx="5.3" ry="9.8" fill="#141414"/>
<path d="M749.5 467.4C750.7 463.7 756.1 459.6 761.2 456.2C766.3 452.8 773 450.6 779.9 446.8C786.8 443.1 796.1 438.4 802.4 433.7C808.6 429 812.4 424.3 817.4 418.7C822.4 413.1 828 405.1 832.4 400C836.8 394.9 839.7 391.2 844 388.2C848.3 385.2 852.3 383.8 858.1 382.2C863.9 380.6 872.5 378.9 878.7 378.4C885 377.9 891.1 378.6 895.6 379.3C900.1 380 902.3 381.9 906 382.5C909.7 383.1 913.2 382.3 918 383C922.8 383.7 930.2 384.9 934.9 386.8C939.6 388.7 943.2 390.9 946.2 394.3C949.2 397.7 951.3 403 952.7 407.4C954.1 411.8 954.8 416.2 954.6 420.6C954.5 425 952.9 429.3 951.8 433.7C950.7 438.1 949.9 441.8 948 446.8C946.1 451.8 943.3 458.4 940.5 463.7C937.7 469 934.6 474.2 931.2 478.6C927.8 483 923.8 486.8 920 489.9C916.2 493 912.4 495.2 908.7 497.4C905 499.6 902.9 501.6 897.7 503C892.5 504.4 885.5 505.3 877.5 506C869.5 506.7 859.2 507 850 507C840.8 507 831.7 506.7 822.5 506C813.3 505.3 802.6 504.5 795 503C787.4 501.5 782.2 499.7 776.7 497C771.2 494.3 765.8 490.1 762 487C758.2 483.9 756.1 481.9 754 478.6C751.9 475.3 748.3 471.1 749.5 467.4Z" fill="url(#gMuz)" filter="url(#fb07)"/>
<g clip-path="url(#muzc)">
<path d="M740 462 Q850 492 960 445 L960 520 L740 520Z" fill="#8e8e8e" opacity="0.48" filter="url(#fb3)"/>
<path d="M745 488 Q850 512 950 478 L950 520 L745 520Z" fill="#7e7e7e" opacity="0.5" filter="url(#fb2)"/>
<path d="M838 452C837.5 455.8 835.3 467 835 475C834.7 483 835.8 495.8 836 500" fill="none" stroke="#b0b0b0" stroke-width="10" opacity="0.4" filter="url(#fb3)"/>
<path d="M955 405C954.7 410.8 955.8 428.3 953 440C950.2 451.7 944.3 465.5 938 475C931.7 484.5 918.8 493.3 915 497" fill="none" stroke="#c4c4c4" stroke-width="8" opacity="0.6" filter="url(#fb2)"/>
<path d="M760 460C766.7 456.7 788.3 449.2 800 440C811.7 430.8 825 410.8 830 405" fill="none" stroke="#cfcfcf" stroke-width="8" opacity="0.5" filter="url(#fb2)"/>
</g>
<path d="M951.8 433.7C951.2 435.9 949.9 441.8 948 446.8C946.1 451.8 943.3 458.4 940.5 463.7C937.7 469 934.6 474.2 931.2 478.6C927.8 483 923.8 486.8 920 489.9C916.2 493 910.6 496.1 908.7 497.4" fill="none" stroke="#b5b5b5" stroke-width="1.2" opacity="0.8" filter="url(#fb0)"/>
<ellipse cx="823.4" cy="382.4" rx="7.3" ry="13.6" fill="#1e1e1e"/>
<ellipse cx="921.2" cy="397.5" rx="14.4" ry="9.6" fill="#0c0c0c" transform="rotate(-6 921.2 397.5)"/>
<ellipse cx="919" cy="393.5" rx="8" ry="3" fill="#2a2a2a" opacity="0.6" filter="url(#fb1)" transform="rotate(-6 921.2 397.5)"/>
<path d="M776.7 495.5C779.8 496.2 787.4 498.8 795 500C802.6 501.2 813.3 501.9 822.5 502.5C831.7 503.1 840.8 503.2 850 503.3C859.2 503.4 869.5 503.4 877.5 503C885.5 502.6 891.6 501.8 897.7 500.6C903.8 499.4 911.5 496.8 914.2 496" fill="none" stroke="#3a3a3a" stroke-width="2.5" opacity="0.5" filter="url(#fb1)"/>
</g>
</g>
<rect x="523.4" y="0" width="2.8" height="854" fill="#1b1b1d"/>
<rect x="0" y="852.4" width="1200" height="1.6" fill="#2c2c2c"/>
<rect x="0" y="0" width="523.6" height="28.5" fill="#313131"/>
<rect x="526.2" y="0" width="673.8" height="28.5" fill="#2f2f2f" opacity="0.93"/>
<rect x="5" y="2.3" width="8.6" height="8.6" rx="1.2" fill="#ececec"/>
<path d="M5.9 9.9l2.2 -3.2l1.6 2l1.2 -1.2l1.8 2.4z" fill="#2c2c2c"/>
<rect x="6.2" y="3.4" width="3" height="2.2" fill="#2c2c2c"/>
<path d="M15.1 6.3L16.6 8L18.2 6.3" fill="none" stroke="#dcdcdc" stroke-width="1.0" stroke-linecap="round" stroke-linejoin="round"/>
<g transform="translate(30.5 6.6)"><path d="M-3.6 -3.6h1.2M-1 -3.6h1.2M1.6 -3.6h1.2M-3.6 -1.8h1.2M1.6 -1.8h1.2M-1.4 -2.2l1.2 2.6M0.6 -2.2l-0.4 2.2" stroke="#e6e6e6" stroke-width="0.9" fill="none"/><path d="M-2.6 0.2L1.6 0.2L0.6 4.4L-1 4.4Z" fill="#e6e6e6"/><path d="M2.6 -4.4l1.4 1.2M3 -1.4l1.4 -0.6" stroke="#e6e6e6" stroke-width="0.7"/></g>
<text x="38.6" y="8.9" font-size="6.2" fill="#e4e4e4">ペイント</text>
<path d="M66.5 6.3L68 8L69.5 6.3" fill="none" stroke="#dcdcdc" stroke-width="1.0" stroke-linecap="round" stroke-linejoin="round"/>
<text x="80" y="8.9" font-size="6.2" fill="#d4d4d4">ビュー</text>
<text x="106" y="8.9" font-size="6.2" fill="#d4d4d4">画像</text>
<rect x="184.3" y="2.4" width="8.8" height="8.4" rx="0.8" fill="none" stroke="#e6e6e6" stroke-width="0.9"/>
<path d="M184.9 10.3l2.6 -4l1.7 2.2l1 -1l2.2 2.8z" fill="#e6e6e6"/>
<circle cx="190.7" cy="4.6" r="0.9" fill="#e6e6e6"/>
<path d="M195 6.3L196.6 8L198.2 6.3" fill="none" stroke="#dcdcdc" stroke-width="1.0" stroke-linecap="round" stroke-linejoin="round"/>
<path d="M202.6 1.6H268.6V11.6H202.6A1.6 1.6 0 0 1 201 10V3.2A1.6 1.6 0 0 1 202.6 1.6Z" fill="#1d1d1d"/>
<text x="204.4" y="8.8" font-size="6.3" fill="#e4e4e4" stroke="#e4e4e4" stroke-width="0.16">Fox Base Color</text>
<path d="M268.9 1.6H312.8A1.6 1.6 0 0 1 314.4 3.2V10A1.6 1.6 0 0 1 312.8 11.6H268.9V1.6Z" fill="#545454"/>
<path d="M280.3 1.6 V11.6 M291.8 1.6 V11.6 M303.2 1.6 V11.6" stroke="#3f3f3f" stroke-width="0.5"/>
<g transform="translate(274.5 6.6)"><path d="M0 -3.7L3.2 -2.6V0.6C3.2 2.4 1.6 3.4 0 4C-1.6 3.4 -3.2 2.4 -3.2 0.6V-2.6Z" fill="none" stroke="#8a8a8a" stroke-width="0.9"/></g>
<g transform="translate(286 6.6)"><path d="M-1.6 -3.8H1.6L3.6 -1.8V2.2H-1.6Z" fill="#e6e6e6"/><path d="M-3.4 -1.8V4H1.4" fill="none" stroke="#e6e6e6" stroke-width="0.9"/><path d="M1.4 -3.8V-1.6H3.6" stroke="#545454" stroke-width="0.6" fill="none"/></g>
<g transform="translate(297.5 6.6)"><path d="M-4.2 -3.4H-0.8L0 -2.4H4.2V3.6H-4.2Z" fill="#e6e6e6"/><path d="M-4.2 -0.9H4.2" stroke="#545454" stroke-width="0.6"/></g>
<g transform="translate(308.8 6.6)"><path d="M-2.4 -2.4L2.4 2.4M2.4 -2.4L-2.4 2.4" stroke="#e6e6e6" stroke-width="1.1" stroke-linecap="round"/></g>
<g transform="translate(323.8 6.6)"><path d="M0.6 -4L4 -0.6L2.8 -0.2L1.2 1.4L1 3.4L-3.4 -1L-1.4 -1.2L0.2 -2.8Z" fill="none" stroke="#9a9a9a" stroke-width="0.9" stroke-linejoin="round"/><path d="M-1.4 1.4L-4 4" stroke="#9a9a9a" stroke-width="0.9" stroke-linecap="round"/></g>
<path d="M449.6 2H458.8V11.6H449.6A1.6 1.6 0 0 1 448 10V3.6A1.6 1.6 0 0 1 449.6 2Z" fill="#4772b3"/>
<path d="M459.2 2H466.4A1.6 1.6 0 0 1 468 3.6V10A1.6 1.6 0 0 1 466.4 11.6H459.2V2Z" fill="#262626"/>
<g transform="translate(453.4 6.8)"><path d="M-3.6 3.6L3 -3M-3.6 -3.2C0 -3.4 3.2 -0.4 3.4 3.4M-3.6 -0.2C-1 -0.2 0.4 1 0.6 3.6" stroke="#fff" stroke-width="1" fill="none" stroke-linecap="round"/><path d="M3.8 -3.8L3.4 -1.2L1.2 -3.4Z" fill="#fff"/></g>
<path d="M462.1 6.4L463.7 8.1L465.2 6.4" fill="none" stroke="#dcdcdc" stroke-width="1.0" stroke-linecap="round" stroke-linejoin="round"/>
<path d="M475.4 2H484.2V11.6H475.4A1.6 1.6 0 0 1 473.8 10V3.6A1.6 1.6 0 0 1 475.4 2Z" fill="#4772b3"/>
<path d="M484.6 2H492.8A1.6 1.6 0 0 1 494.4 3.6V10A1.6 1.6 0 0 1 492.8 11.6H484.6V2Z" fill="#262626"/>
<g transform="translate(479 6.8)"><circle cx="-1" cy="1" r="3.1" fill="none" stroke="#fff" stroke-width="1"/><circle cx="1.2" cy="-1.2" r="2.9" fill="#fff"/></g>
<path d="M488 6.4L489.6 8.1L491.1 6.4" fill="none" stroke="#dcdcdc" stroke-width="1.0" stroke-linecap="round" stroke-linejoin="round"/>
<g transform="translate(508.7 6.6)"><rect x="-4.3" y="-4.3" width="8.6" height="8.6" rx="1" fill="#efefef"/><path d="M-3.3 -3.3H3.3L-3.3 3.3Z" fill="#222"/><path d="M3.4 -3.4L-3.4 3.4" stroke="#efefef" stroke-width="0.7"/></g>
<path d="M515.5 6.3L517 8L518.5 6.3" fill="none" stroke="#dcdcdc" stroke-width="1.0" stroke-linecap="round" stroke-linejoin="round"/>
<path d="M25.9 16.5H41.3V26.9H25.9A1.6 1.6 0 0 1 24.3 25.3V18.1A1.6 1.6 0 0 1 25.9 16.5Z" fill="#2b2b2b"/>
<path d="M41.3 16.5H108.2A1.6 1.6 0 0 1 109.8 18.1V25.3A1.6 1.6 0 0 1 108.2 26.9H41.3V16.5Z" fill="#1d1d1d"/>
<circle cx="32.6" cy="21.1" r="2.1" fill="#e8e8e8"/>
<circle cx="32.1" cy="20.6" r="1.1" fill="#ffffff"/>
<text x="45.8" y="23.9" font-size="6.3" fill="#e4e4e4" stroke="#e4e4e4" stroke-width="0.16">TexDraw</text>
<path d="M115.8 16.5H134.3V26.9H115.8A1.8 1.8 0 0 1 114 25.1V18.3A1.8 1.8 0 0 1 115.8 16.5Z" fill="#000"/>
<path d="M134.3 16.5H153.5A1.8 1.8 0 0 1 155.3 18.3V25.1A1.8 1.8 0 0 1 153.5 26.9H134.3V16.5Z" fill="#f2b33a"/>
<rect x="163.8" y="16.5" width="73.8" height="10.4" rx="1.6" fill="#282828"/>
<text x="167.4" y="24" font-size="6.2" fill="#e4e4e4">ミックス</text>
<path d="M232.8 21.2L234.4 22.9L236 21.2" fill="none" stroke="#dcdcdc" stroke-width="1.0" stroke-linecap="round" stroke-linejoin="round"/>
<path d="M243.6 16.5H307.4V26.9H243.6A1.6 1.6 0 0 1 242 25.3V18.1A1.6 1.6 0 0 1 243.6 16.5Z" fill="#545454"/>
<path d="M243.6 16.5H247.4V26.9H243.6A1.6 1.6 0 0 1 242 25.3V18.1A1.6 1.6 0 0 1 243.6 16.5Z" fill="#4772b3"/>
<text x="250.9" y="24" font-size="6.2" fill="#d6d6d6">半径</text>
<text x="284.2" y="23.9" font-size="6.3" fill="#e4e4e4" stroke="#e4e4e4" stroke-width="0.16">50 px</text>
<path d="M307.9 16.5H316.8A1.6 1.6 0 0 1 318.4 18.1V25.3A1.6 1.6 0 0 1 316.8 26.9H307.9V16.5Z" fill="#545454"/>
<g transform="translate(313.2 21.7)"><path d="M-0.8 1.6L2.6 -3.2L3.8 -2.2L0.4 2.4L-1.4 3Z" fill="#e0e0e0"/><path d="M-3 -1.2A3.6 3.6 0 0 0 -0.6 3.6" fill="none" stroke="#e0e0e0" stroke-width="0.9" stroke-linecap="round"/></g>
<path d="M323.6 16.5H386.2V26.9H323.6A1.6 1.6 0 0 1 322 25.3V18.1A1.6 1.6 0 0 1 323.6 16.5Z" fill="#4772b3"/>
<text x="330.6" y="24" font-size="6.2" fill="#e4e4e4">強さ</text>
<text x="362.9" y="23.9" font-size="6.3" fill="#e4e4e4" stroke="#e4e4e4" stroke-width="0.16">1.000</text>
<path d="M386.8 16.5H396.6A1.6 1.6 0 0 1 398.2 18.1V25.3A1.6 1.6 0 0 1 396.6 26.9H386.8V16.5Z" fill="#5a86c9"/>
<g transform="translate(392.5 21.7)"><path d="M-0.8 1.6L2.6 -3.2L3.8 -2.2L0.4 2.4L-1.4 3Z" fill="#ffffff"/><path d="M-3 -1.2A3.6 3.6 0 0 0 -0.6 3.6" fill="none" stroke="#ffffff" stroke-width="0.9" stroke-linecap="round"/></g>
<rect x="404.4" y="16.5" width="35.8" height="10.4" rx="1.6" fill="#282828"/>
<text x="407.2" y="24" font-size="6.2" fill="#e4e4e4">詳細設定</text>
<path d="M435 21.2L436.6 22.9L438.1 21.2" fill="none" stroke="#dcdcdc" stroke-width="1.0" stroke-linecap="round" stroke-linejoin="round"/>
<rect x="446.9" y="16.5" width="41.9" height="10.4" rx="1.6" fill="#282828"/>
<text x="449.7" y="24" font-size="6.2" fill="#e4e4e4">ストローク</text>
<path d="M483.6 21.2L485.2 22.9L486.8 21.2" fill="none" stroke="#dcdcdc" stroke-width="1.0" stroke-linecap="round" stroke-linejoin="round"/>
<rect x="495.6" y="16.5" width="24" height="10.4" rx="1.6" fill="#282828"/>
<text x="498.4" y="24" font-size="6.2" fill="#e4e4e4">減衰</text>
<path d="M514.5 21.2L516 22.9L517.5 21.2" fill="none" stroke="#dcdcdc" stroke-width="1.0" stroke-linecap="round" stroke-linejoin="round"/>
<g transform="translate(538 6.6)"><path d="M-3.8 3.2H3.4M-3.2 3.2L-1.8 -0.4M3 3.2L1.8 -0.4M-1.8 -0.4H1.8" stroke="#e6e6e6" stroke-width="0.9" fill="none" stroke-linecap="round"/><circle cx="1.4" cy="-2.3" r="2.1" fill="#e6e6e6"/></g>
<path d="M544.1 6.3L545.6 8L547.1 6.3" fill="none" stroke="#dcdcdc" stroke-width="1.0" stroke-linecap="round" stroke-linejoin="round"/>
<rect x="550.6" y="1.6" width="65.4" height="10" rx="1.6" fill="#2b2b2b"/>
<g transform="translate(558.2 6.6)"><path d="M-3.6 -3.6h1.2M-1 -3.6h1.2M1.6 -3.6h1.2M-3.6 -1.8h1.2M1.6 -1.8h1.2M-1.4 -2.2l1.2 2.6M0.6 -2.2l-0.4 2.2" stroke="#e6e6e6" stroke-width="0.9" fill="none"/><path d="M-2.6 0.2L1.6 0.2L0.6 4.4L-1 4.4Z" fill="#e6e6e6"/><path d="M2.6 -4.4l1.4 1.2M3 -1.4l1.4 -0.6" stroke="#e6e6e6" stroke-width="0.7"/></g>
<text x="567" y="8.9" font-size="6.2" fill="#e4e4e4">テクスチャ</text>
<text x="598.4" y="8.8" font-size="6.3" fill="#e4e4e4" stroke="#e4e4e4" stroke-width="0.16">...</text>
<path d="M609.2 6.3L610.8 8L612.3 6.3" fill="none" stroke="#dcdcdc" stroke-width="1.0" stroke-linecap="round" stroke-linejoin="round"/>
<g transform="translate(623.4 6.6)"><rect x="-4.6" y="-4.6" width="9.2" height="9.2" rx="1.4" fill="#5a5a5a"/><rect x="-3.2" y="-2" width="5.4" height="5.4" fill="#f4f4f4"/><path d="M-1.6 -3.4H3.4V1.8" stroke="#cfcfcf" stroke-width="0.9" fill="none"/></g>
<text x="636" y="8.9" font-size="6.2" fill="#d4d4d4">ビュー</text>
<g transform="translate(1059.4 6.6)"><path d="M-3.8 -0.6C-2.4 -3.6 2.4 -3.8 4 -0.8C2.6 1.6 0 2 -1.4 1.4Z" fill="#e6e6e6"/><circle cx="0.6" cy="-0.9" r="1.2" fill="#2f2f2f"/><path d="M-4 -0.2L-0.6 2.4L-3.2 4.2Z" fill="#e6e6e6"/></g>
<path d="M1067.2 6.3L1068.8 8L1070.3 6.3" fill="none" stroke="#dcdcdc" stroke-width="1.0" stroke-linecap="round" stroke-linejoin="round"/>
<path d="M1077.2 2H1086.3V11.6H1077.2A1.6 1.6 0 0 1 1075.6 10V3.6A1.6 1.6 0 0 1 1077.2 2Z" fill="#4772b3"/>
<path d="M1086.7 2H1094.4A1.6 1.6 0 0 1 1096 3.6V10A1.6 1.6 0 0 1 1094.4 11.6H1086.7V2Z" fill="#262626"/>
<g transform="translate(1080.9 6.8)"><path d="M-3.6 3.6L3 -3M-3.6 -3.2C0 -3.4 3.2 -0.4 3.4 3.4M-3.6 -0.2C-1 -0.2 0.4 1 0.6 3.6" stroke="#fff" stroke-width="1" fill="none" stroke-linecap="round"/><path d="M3.8 -3.8L3.4 -1.2L1.2 -3.4Z" fill="#fff"/></g>
<path d="M1089.9 6.4L1091.5 8.1L1093 6.4" fill="none" stroke="#dcdcdc" stroke-width="1.0" stroke-linecap="round" stroke-linejoin="round"/>
<path d="M1103.1 2H1112V11.6H1103.1A1.6 1.6 0 0 1 1101.5 10V3.6A1.6 1.6 0 0 1 1103.1 2Z" fill="#4772b3"/>
<path d="M1112.4 2H1120.4A1.6 1.6 0 0 1 1122 3.6V10A1.6 1.6 0 0 1 1120.4 11.6H1112.4V2Z" fill="#262626"/>
<g transform="translate(1106.8 6.8)"><circle cx="-1" cy="1" r="3.1" fill="none" stroke="#fff" stroke-width="1"/><circle cx="1.2" cy="-1.2" r="2.9" fill="#fff"/></g>
<path d="M1115.8 6.4L1117.3 8.1L1118.8 6.4" fill="none" stroke="#dcdcdc" stroke-width="1.0" stroke-linecap="round" stroke-linejoin="round"/>
<g transform="translate(1132.5 6.6)"><rect x="-2.4" y="-4.2" width="6.6" height="6.6" rx="0.8" fill="none" stroke="#a8a8a8" stroke-width="0.9"/><rect x="-4.2" y="-2.2" width="6.4" height="6.4" rx="0.8" fill="#3a3a3a" stroke="#a8a8a8" stroke-width="0.9"/><rect x="-2.2" y="-0.4" width="2.6" height="2.6" fill="#a8a8a8"/></g>
<path d="M1143.6 1.9H1152.3V11.6H1143.6A1.6 1.6 0 0 1 1142 10V3.5A1.6 1.6 0 0 1 1143.6 1.9Z" fill="#545454"/>
<rect x="1152.7" y="1.9" width="10.6" height="9.7" rx="0" fill="#4772b3"/>
<rect x="1163.7" y="1.9" width="10.3" height="9.7" rx="0" fill="#545454"/>
<path d="M1174.4 1.9H1183.4A1.6 1.6 0 0 1 1185 3.5V10A1.6 1.6 0 0 1 1183.4 11.6H1174.4V1.9Z" fill="#545454"/>
<g transform="translate(1147.2 6.8)"><circle r="3.7" fill="none" stroke="#d8d8d8" stroke-width="0.8"/><path d="M-3.7 0H3.7M0 -3.7V3.7M-3 -2C-1 -1 1 -1 3 -2" stroke="#d8d8d8" stroke-width="0.7" fill="none"/></g>
<g transform="translate(1158 6.8)"><circle r="4" fill="#fff"/></g>
<g transform="translate(1168.8 6.8)"><circle r="3.9" fill="#d8d8d8"/><path d="M0 -3.9A3.9 3.9 0 0 1 0 3.9Z" fill="#7a7a7a"/><path d="M0 0L-3.4 2" stroke="#545454" stroke-width="0.6"/></g>
<g transform="translate(1179.7 6.8)"><circle r="3.9" fill="#c8c8c8"/><circle cx="-1.1" cy="-1.2" r="1.4" fill="#fff"/><path d="M-2.6 3A3.9 3.9 0 0 0 3.9 0.4C2 2.6 0 3.2 -2.6 3Z" fill="#8a8a8a"/></g>
<path d="M1188.9 6.3L1190.4 8L1192 6.3" fill="none" stroke="#dcdcdc" stroke-width="1.0" stroke-linecap="round" stroke-linejoin="round"/>
<path d="M553.6 16.5H569V26.9H553.6A1.6 1.6 0 0 1 552 25.3V18.1A1.6 1.6 0 0 1 553.6 16.5Z" fill="#2b2b2b"/>
<path d="M569 16.5H635.9A1.6 1.6 0 0 1 637.5 18.1V25.3A1.6 1.6 0 0 1 635.9 26.9H569V16.5Z" fill="#1d1d1d"/>
<circle cx="560.3" cy="21.1" r="2.1" fill="#e8e8e8"/>
<circle cx="559.8" cy="20.6" r="1.1" fill="#ffffff"/>
<text x="573.5" y="23.9" font-size="6.3" fill="#e4e4e4" stroke="#e4e4e4" stroke-width="0.16">TexDraw</text>
<path d="M642.8 16.5H661.3V26.9H642.8A1.8 1.8 0 0 1 641 25.1V18.3A1.8 1.8 0 0 1 642.8 16.5Z" fill="#000"/>
<path d="M661.3 16.5H680.5A1.8 1.8 0 0 1 682.3 18.3V25.1A1.8 1.8 0 0 1 680.5 26.9H661.3V16.5Z" fill="#f2b33a"/>
<rect x="690" y="16.5" width="75" height="10.4" rx="1.6" fill="#282828"/>
<text x="693.6" y="24" font-size="6.2" fill="#e4e4e4">ミックス</text>
<path d="M760.2 21.2L761.8 22.9L763.3 21.2" fill="none" stroke="#dcdcdc" stroke-width="1.0" stroke-linecap="round" stroke-linejoin="round"/>
<path d="M770.4 16.5H834.2V26.9H770.4A1.6 1.6 0 0 1 768.8 25.3V18.1A1.6 1.6 0 0 1 770.4 16.5Z" fill="#545454"/>
<path d="M770.4 16.5H774.2V26.9H770.4A1.6 1.6 0 0 1 768.8 25.3V18.1A1.6 1.6 0 0 1 770.4 16.5Z" fill="#4772b3"/>
<text x="777.7" y="24" font-size="6.2" fill="#d6d6d6">半径</text>
<text x="811" y="23.9" font-size="6.3" fill="#e4e4e4" stroke="#e4e4e4" stroke-width="0.16">50 px</text>
<path d="M834.7 16.5H843.6A1.6 1.6 0 0 1 845.2 18.1V25.3A1.6 1.6 0 0 1 843.6 26.9H834.7V16.5Z" fill="#545454"/>
<g transform="translate(840 21.7)"><path d="M-0.8 1.6L2.6 -3.2L3.8 -2.2L0.4 2.4L-1.4 3Z" fill="#e0e0e0"/><path d="M-3 -1.2A3.6 3.6 0 0 0 -0.6 3.6" fill="none" stroke="#e0e0e0" stroke-width="0.9" stroke-linecap="round"/></g>
<path d="M850.6 16.5H913.6V26.9H850.6A1.6 1.6 0 0 1 849 25.3V18.1A1.6 1.6 0 0 1 850.6 16.5Z" fill="#4772b3"/>
<text x="857.6" y="24" font-size="6.2" fill="#e4e4e4">強さ</text>
<text x="890.3" y="23.9" font-size="6.3" fill="#e4e4e4" stroke="#e4e4e4" stroke-width="0.16">1.000</text>
<path d="M914.2 16.5H924A1.6 1.6 0 0 1 925.6 18.1V25.3A1.6 1.6 0 0 1 924 26.9H914.2V16.5Z" fill="#5a86c9"/>
<g transform="translate(919.9 21.7)"><path d="M-0.8 1.6L2.6 -3.2L3.8 -2.2L0.4 2.4L-1.4 3Z" fill="#ffffff"/><path d="M-3 -1.2A3.6 3.6 0 0 0 -0.6 3.6" fill="none" stroke="#ffffff" stroke-width="0.9" stroke-linecap="round"/></g>
<rect x="930.6" y="16.5" width="30.6" height="10.4" rx="1.6" fill="#282828"/>
<text x="933.7" y="24" font-size="6.2" fill="#e4e4e4">ブラシ</text>
<path d="M956.1 21.2L957.6 22.9L959.1 21.2" fill="none" stroke="#dcdcdc" stroke-width="1.0" stroke-linecap="round" stroke-linejoin="round"/>
<rect x="966" y="16.5" width="44.4" height="10.4" rx="1.6" fill="#282828"/>
<text x="969.8" y="24" font-size="6.2" fill="#e4e4e4">テクスチャ</text>
<path d="M1005.2 21.2L1006.8 22.9L1008.3 21.2" fill="none" stroke="#dcdcdc" stroke-width="1.0" stroke-linecap="round" stroke-linejoin="round"/>
<rect x="1015" y="16.5" width="64" height="10.4" rx="1.6" fill="#282828"/>
<text x="1018.7" y="24" font-size="6.2" fill="#e4e4e4">テクスチャマスク</text>
<path d="M1073.9 21.2L1075.4 22.9L1077 21.2" fill="none" stroke="#dcdcdc" stroke-width="1.0" stroke-linecap="round" stroke-linejoin="round"/>
<rect x="1083" y="16.5" width="43.6" height="10.4" rx="1.6" fill="#282828"/>
<text x="1086" y="24" font-size="6.2" fill="#e4e4e4">ストローク</text>
<path d="M1121.5 21.2L1123 22.9L1124.5 21.2" fill="none" stroke="#dcdcdc" stroke-width="1.0" stroke-linecap="round" stroke-linejoin="round"/>
<rect x="1132" y="16.5" width="24.4" height="10.4" rx="1.6" fill="#282828"/>
<text x="1134.4" y="24" font-size="6.2" fill="#e4e4e4">減衰</text>
<path d="M1151.3 21.2L1152.8 22.9L1154.4 21.2" fill="none" stroke="#dcdcdc" stroke-width="1.0" stroke-linecap="round" stroke-linejoin="round"/>
<rect x="1161" y="16.5" width="37.8" height="10.4" rx="1.6" fill="#282828"/>
<text x="1164.3" y="24" font-size="6.2" fill="#e4e4e4">カーソル</text>
<path d="M1193.7 21.2L1195.2 22.9L1196.8 21.2" fill="none" stroke="#dcdcdc" stroke-width="1.0" stroke-linecap="round" stroke-linejoin="round"/>
<rect x="3.4" y="33.5" width="21.6" height="119.1" rx="2.2" fill="#2a2a2a"/>
<path d="M5.6 33.5H22.8A2.2 2.2 0 0 1 25 35.7V50.4A2.2 2.2 0 0 1 22.8 52.6H5.6A2.2 2.2 0 0 1 3.4 50.4V35.7A2.2 2.2 0 0 1 5.6 33.5Z" fill="#4772b3"/>
<rect x="3.4" y="50" width="21.6" height="2.6" fill="#4772b3"/>
<path d="M4.4 72.9H24 M4.4 92.9H24 M4.4 112.9H24 M4.4 132.9H24" stroke="#353535" stroke-width="0.5"/>
<rect x="3.4" y="156.7" width="21.6" height="18.8" rx="2.2" fill="#2a2a2a"/>
<g transform="translate(14.2 43) scale(0.86) translate(-14.2 -43)">
<g transform="translate(14.2 43)"><g transform="scale(1.16)"><path d="M4.7 -5.6L-0.9 0.3" stroke="#f0f8ff" stroke-width="1.5" stroke-linecap="round"/><ellipse cx="-3.5" cy="2" rx="2.5" ry="1.75" transform="rotate(-28 -3.5 2)" fill="#fff"/><path d="M-4.4 3.9C-2 4.5 1 3.5 3.3 3.2" stroke="#d9a3a3" stroke-width="0.7" fill="none" stroke-linecap="round"/></g></g>
</g>
<g transform="translate(14.2 63) scale(0.86) translate(-14.2 -63)">
<g transform="translate(14.2 63)"><path d="M0 -5.6C1.6 -3 3.4 -1.2 3.4 0.8A3.4 3.4 0 0 1 -3.4 0.8C-3.4 -1.2 -1.6 -3 0 -5.6Z" fill="#eaeaea"/><path d="M-4.6 2.4C-3.4 5 3.4 5 4.6 2.4" stroke="#c4c4c4" stroke-width="0.9" fill="none" stroke-linecap="round"/></g>
</g>
<g transform="translate(14.2 83) scale(0.86) translate(-14.2 -83)">
<g transform="translate(14.2 83)"><path d="M-2.6 -0.6C-3.6 -4 0.6 -6.4 3 -4C4.6 -2.6 3.8 0.6 3.6 3.4L1.2 3.6C1.4 1.8 1.4 0.6 0.4 -0.2L-2 3.4L-3.6 3Z" fill="#eaeaea"/><path d="M-4.4 5H2.6" stroke="#d0d0d0" stroke-width="1.1" stroke-linecap="round"/></g>
</g>
<g transform="translate(14.2 103) scale(0.86) translate(-14.2 -103)">
<g transform="translate(14.2 103)"><circle cx="0" cy="-3.4" r="2.1" fill="#eaeaea"/><path d="M-1.2 -2H1.2L1.8 0.6H4.2V3H-4.2V0.6H-1.8Z" fill="#eaeaea"/><path d="M-4.6 4.8H4.6" stroke="#eaeaea" stroke-width="1.1"/></g>
</g>
<g transform="translate(14.2 123) scale(0.86) translate(-14.2 -123)">
<g transform="translate(14.2 123)"><path d="M0.6 -5.6L5.4 -0.8L0.8 3.8L-4 -1Z" fill="none" stroke="#eaeaea" stroke-width="1"/><path d="M-3.2 -0.8H4.6L0.8 3.2Z" fill="#eaeaea"/><path d="M0.6 -5.8V-1.6" stroke="#eaeaea" stroke-width="0.9"/><circle cx="-4.4" cy="3.4" r="1.6" fill="#c4c4c4"/></g>
</g>
<g transform="translate(14.2 143) scale(0.86) translate(-14.2 -143)">
<g transform="translate(14.2 143)"><rect x="-1.6" y="-5" width="6.6" height="6.6" fill="#a8a8a8"/><rect x="-4.8" y="-1.8" width="6.8" height="6.8" fill="#d8d8d8"/><path d="M0.2 -3.6L4 -2L1.6 0.2Z" fill="#fff"/></g>
</g>
<g transform="translate(14.2 166) scale(0.86) translate(-14.2 -166)">
<g transform="translate(14.2 166)"><g transform="scale(1.16)"><path d="M2.7 -5.5L-5.6 3" stroke="#ececec" stroke-width="1.7" stroke-linecap="round"/><path d="M-6 3.9C-3.5 7 -0.6 2.1 1.8 1.6C4.4 1.2 4.7 3.6 6.2 4.9" stroke="#b4d4cc" stroke-width="0.85" fill="none" stroke-linecap="round"/></g></g>
</g>
<path d="M22.6 174.3l1.6 0l0 -1.6z" fill="#c8c8c8"/>
<rect x="530.4" y="33.5" width="21.6" height="119.1" rx="2.2" fill="#2a2a2a"/>
<path d="M532.6 33.5H549.8A2.2 2.2 0 0 1 552 35.7V50.4A2.2 2.2 0 0 1 549.8 52.6H532.6A2.2 2.2 0 0 1 530.4 50.4V35.7A2.2 2.2 0 0 1 532.6 33.5Z" fill="#4772b3"/>
<rect x="530.4" y="50" width="21.6" height="2.6" fill="#4772b3"/>
<path d="M531.4 72.9H551 M531.4 92.9H551 M531.4 112.9H551 M531.4 132.9H551" stroke="#353535" stroke-width="0.5"/>
<rect x="530.4" y="156.7" width="21.6" height="18.8" rx="2.2" fill="#2a2a2a"/>
<g transform="translate(541.2 43) scale(0.86) translate(-541.2 -43)">
<g transform="translate(541.2 43)"><g transform="scale(1.16)"><path d="M4.7 -5.6L-0.9 0.3" stroke="#f0f8ff" stroke-width="1.5" stroke-linecap="round"/><ellipse cx="-3.5" cy="2" rx="2.5" ry="1.75" transform="rotate(-28 -3.5 2)" fill="#fff"/><path d="M-4.4 3.9C-2 4.5 1 3.5 3.3 3.2" stroke="#d9a3a3" stroke-width="0.7" fill="none" stroke-linecap="round"/></g></g>
</g>
<g transform="translate(541.2 63) scale(0.86) translate(-541.2 -63)">
<g transform="translate(541.2 63)"><path d="M0 -5.6C1.6 -3 3.4 -1.2 3.4 0.8A3.4 3.4 0 0 1 -3.4 0.8C-3.4 -1.2 -1.6 -3 0 -5.6Z" fill="#eaeaea"/><path d="M-4.6 2.4C-3.4 5 3.4 5 4.6 2.4" stroke="#c4c4c4" stroke-width="0.9" fill="none" stroke-linecap="round"/></g>
</g>
<g transform="translate(541.2 83) scale(0.86) translate(-541.2 -83)">
<g transform="translate(541.2 83)"><path d="M-2.6 -0.6C-3.6 -4 0.6 -6.4 3 -4C4.6 -2.6 3.8 0.6 3.6 3.4L1.2 3.6C1.4 1.8 1.4 0.6 0.4 -0.2L-2 3.4L-3.6 3Z" fill="#eaeaea"/><path d="M-4.4 5H2.6" stroke="#d0d0d0" stroke-width="1.1" stroke-linecap="round"/></g>
</g>
<g transform="translate(541.2 103) scale(0.86) translate(-541.2 -103)">
<g transform="translate(541.2 103)"><circle cx="0" cy="-3.4" r="2.1" fill="#eaeaea"/><path d="M-1.2 -2H1.2L1.8 0.6H4.2V3H-4.2V0.6H-1.8Z" fill="#eaeaea"/><path d="M-4.6 4.8H4.6" stroke="#eaeaea" stroke-width="1.1"/></g>
</g>
<g transform="translate(541.2 123) scale(0.86) translate(-541.2 -123)">
<g transform="translate(541.2 123)"><path d="M0.6 -5.6L5.4 -0.8L0.8 3.8L-4 -1Z" fill="none" stroke="#eaeaea" stroke-width="1"/><path d="M-3.2 -0.8H4.6L0.8 3.2Z" fill="#eaeaea"/><path d="M0.6 -5.8V-1.6" stroke="#eaeaea" stroke-width="0.9"/><circle cx="-4.4" cy="3.4" r="1.6" fill="#c4c4c4"/></g>
</g>
<g transform="translate(541.2 143) scale(0.86) translate(-541.2 -143)">
<g transform="translate(541.2 143)"><rect x="-1.6" y="-5" width="6.6" height="6.6" fill="#a8a8a8"/><rect x="-4.8" y="-1.8" width="6.8" height="6.8" fill="#d8d8d8"/><path d="M0.2 -3.6L4 -2L1.6 0.2Z" fill="#fff"/></g>
</g>
<g transform="translate(541.2 166) scale(0.86) translate(-541.2 -166)">
<g transform="translate(541.2 166)"><g transform="scale(1.16)"><path d="M2.7 -5.5L-5.6 3" stroke="#ececec" stroke-width="1.7" stroke-linecap="round"/><path d="M-6 3.9C-3.5 7 -0.6 2.1 1.8 1.6C4.4 1.2 4.7 3.6 6.2 4.9" stroke="#b4d4cc" stroke-width="0.85" fill="none" stroke-linecap="round"/></g></g>
</g>
<path d="M549.6 174.3l1.6 0l0 -1.6z" fill="#c8c8c8"/>
<circle cx="511.4" cy="41.4" r="6.8" fill="#202020" opacity="0.4"/>
<g transform="translate(511.4 41.4)"><circle cx="0.9" cy="-1" r="3" fill="none" stroke="#f2f2f2" stroke-width="1.5"/><path d="M-1.4 1.4L-4.2 4.2" stroke="#f2f2f2" stroke-width="1.5" stroke-linecap="round"/><path d="M-0.3 -1H2.1M0.9 -2.2V0.2" stroke="#f2f2f2" stroke-width="0.8"/></g>
<circle cx="511.4" cy="59.1" r="6.8" fill="#202020" opacity="0.4"/>
<g transform="translate(511.4 59.1)"><path d="M-2.2 -0.4V-3.4M-0.5 -0.8V-4.4M1.2 -0.8V-4M2.8 -0.2V-2.8" stroke="#f2f2f2" stroke-width="1.2" stroke-linecap="round"/><path d="M-2.8 -0.6H3.4V1.6C3.4 3.4 2 4.6 0.4 4.6C-1.2 4.6 -2 3.8 -3 2.4L-4.6 0.2L-3.6 -0.4L-2.8 0.6Z" fill="#f2f2f2"/></g>
<circle cx="1187.2" cy="88.7" r="7.2" fill="#202020" opacity="0.65"/>
<g transform="translate(1187.2 88.7)"><circle cx="0.9" cy="-1" r="3" fill="none" stroke="#f2f2f2" stroke-width="1.5"/><path d="M-1.4 1.4L-4.2 4.2" stroke="#f2f2f2" stroke-width="1.5" stroke-linecap="round"/><path d="M-0.3 -1H2.1M0.9 -2.2V0.2" stroke="#f2f2f2" stroke-width="0.8"/></g>
<circle cx="1187.2" cy="105.9" r="7.2" fill="#202020" opacity="0.65"/>
<g transform="translate(1187.2 105.9)"><path d="M-2.2 -0.4V-3.4M-0.5 -0.8V-4.4M1.2 -0.8V-4M2.8 -0.2V-2.8" stroke="#f2f2f2" stroke-width="1.2" stroke-linecap="round"/><path d="M-2.8 -0.6H3.4V1.6C3.4 3.4 2 4.6 0.4 4.6C-1.2 4.6 -2 3.8 -3 2.4L-4.6 0.2L-3.6 -0.4L-2.8 0.6Z" fill="#f2f2f2"/></g>
<circle cx="1187.2" cy="123" r="7.2" fill="#202020" opacity="0.65"/>
<g transform="translate(1187.2 123)"><rect x="-3.8" y="-0.6" width="5.8" height="4.4" rx="0.7" fill="#f2f2f2"/><path d="M2 1L4.4 -0.4V3.6L2 2.2Z" fill="#f2f2f2"/><circle cx="-2.4" cy="-2.6" r="1.7" fill="#f2f2f2"/><circle cx="1" cy="-2.8" r="1.9" fill="#f2f2f2"/></g>
<circle cx="1187.2" cy="140.6" r="7.2" fill="#202020" opacity="0.65"/>
<g transform="translate(1187.2 140.6)"><path d="M-2.6 -3.8H2.6L4.4 3.8H-4.4Z" fill="none" stroke="#f2f2f2" stroke-width="1"/><path d="M-3.3 -1.2H3.3M-3.9 1.4H3.9M-0.9 -3.8L-1.5 3.8M0.9 -3.8L1.5 3.8" stroke="#f2f2f2" stroke-width="0.8"/></g>
<path d="M522.2 39l-1.7 1.9l1.7 1.9" fill="none" stroke="#b8b8b8" stroke-width="0.9" stroke-linecap="round" stroke-linejoin="round"/>
<path d="M1198.6 39l-1.7 1.9l1.7 1.9" fill="none" stroke="#b8b8b8" stroke-width="0.9" stroke-linecap="round" stroke-linejoin="round"/>
<path d="M1171.3 57.2V39" stroke="#3f7fe0" stroke-width="1.1"/>
<circle cx="1153.9" cy="57.2" r="4.5" fill="#8a3346" stroke="#c4405a" stroke-width="0.9" opacity="0.95"/>
<circle cx="1171.3" cy="75.5" r="4.5" fill="#2f568f" stroke="#3d6fc0" stroke-width="0.9" opacity="0.95"/>
<circle cx="1165.1" cy="57.2" r="4.5" fill="#6f9d1c" opacity="1"/>
<text x="1163.2" y="59.3" font-size="5.6" font-weight="bold" fill="#111">Y</text>
<circle cx="1177.4" cy="57.2" r="4.5" fill="#5a7a1c" stroke="#8fc628" stroke-width="0.9" opacity="1"/>
<circle cx="1188.5" cy="57.2" r="4.5" fill="#dc3550" opacity="1"/>
<text x="1186.6" y="59.3" font-size="5.6" font-weight="bold" fill="#111">X</text>
<circle cx="1171.3" cy="38.7" r="4.5" fill="#3b82ea" opacity="1"/>
<text x="1169.6" y="40.8" font-size="5.6" font-weight="bold" fill="#111">Z</text>
<text x="562.6" y="40.7" font-size="6.2" font-weight="bold" fill="#000" opacity="0.55">ユーザー・透視投影</text>
<text x="563" y="51.3" font-size="6.3" fill="#000" stroke="#000" stroke-width="0.5" opacity="0.55">(1) Ears</text>
<text x="562.4" y="40.4" font-size="6.2" font-weight="bold" fill="#f2f2f2">ユーザー・透視投影</text>
<text x="562.4" y="50.7" font-size="6.3" fill="#f2f2f2" stroke="#f2f2f2" stroke-width="0.25">(1) Ears</text>
</svg>
</body></html>
